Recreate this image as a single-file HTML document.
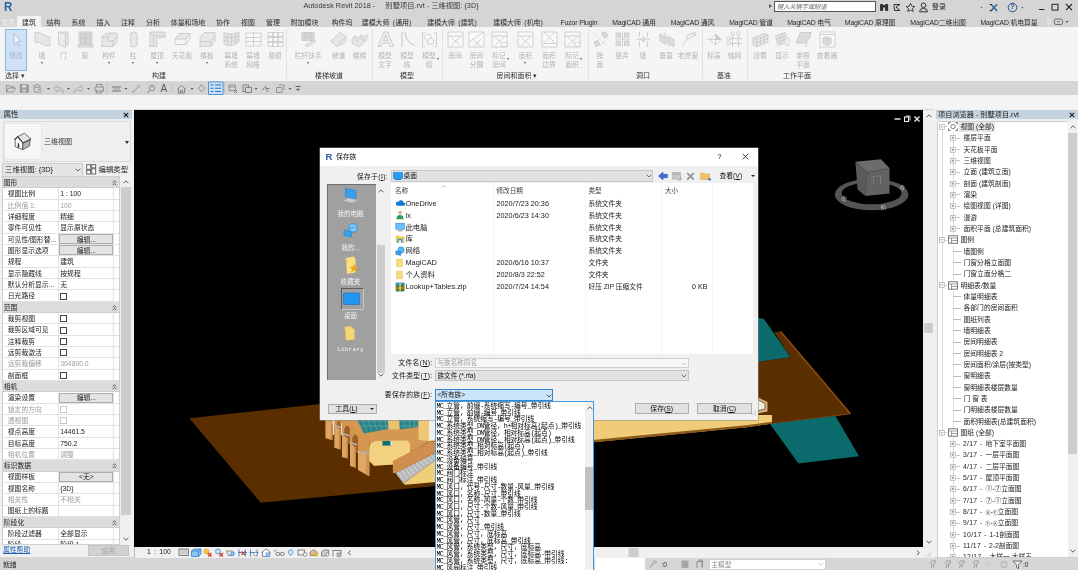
<!DOCTYPE html>
<html lang="zh-CN">
<head>
<meta charset="utf-8">
<title>Autodesk Revit 2018 - 别墅项目.rvt - 三维视图: {3D}</title>
<style>
*{box-sizing:border-box;margin:0;padding:0}
html,body{width:1078px;height:570px;overflow:hidden;background:#d5d5d5}
#root{position:absolute;left:0;top:0;width:1078px;height:570px;will-change:transform;overflow:hidden}
body{position:relative;font-family:"Liberation Sans","Noto Sans CJK SC",sans-serif;font-size:7.2px;color:#222;line-height:10px}
.a{position:absolute;white-space:nowrap}
.c{position:absolute;white-space:nowrap;margin-top:.25px;transform:translate(-50%,-50%);text-align:center}
.l{position:absolute;white-space:nowrap;margin-top:.25px;transform:translate(0,-50%)}
.r{position:absolute;white-space:nowrap;margin-top:.25px;transform:translate(-100%,-50%)}
svg{position:absolute;overflow:visible}
/* title */
#title{left:0;top:0;width:1078px;height:15px;background:#d5d5d5}
#tabs{left:0;top:15px;width:1078px;height:12px;background:#d5d5d5}
#tabs .c{top:7.3px;font-size:6.9px;color:#2b2b2b}
#tabon{left:17px;top:1px;width:24px;height:12px;background:#f2f2f2}
#ribbon{left:0;top:27px;width:1078px;height:54px;background:#f5f5f5}
#ribbon .lb{font-size:6.8px;color:#b4b4b4;line-height:9.2px;top:23.9px;transform:translate(-50%,0);text-align:center;position:absolute;white-space:nowrap}
#ribbon .pt{font-size:7px;color:#333;top:48.5px}
#ribbon .sep{position:absolute;top:2px;width:1px;height:50px;background:#e2e2e2}
#qat{left:0;top:81px;width:1078px;height:14px;background:#d5d5d5}
#opt{left:0;top:95px;width:1078px;height:14px;background:#f4f4f4}
#canvas{left:134px;top:110px;width:789px;height:436.5px;background:#000;overflow:hidden}
#status{left:0;top:557.5px;width:1078px;height:12.5px;background:#d6d6d6}
</style>
</head>
<body>
<div id="root">
<div class="a" id="title">
<div class="a" style="left:4px;top:2.3px;font-size:12.5px;font-weight:bold;color:#2c5fa5;letter-spacing:-0.5px;transform:scaleX(0.92);transform-origin:0 0">R</div>
<div class="c" style="left:391px;top:5.8px;font-size:7.3px;color:#3a3a3a;white-space:pre">Autodesk Revit 2018 -     别墅项目.rvt - 三维视图: {3D}</div>
<div class="a" style="left:768.5px;top:3.5px;width:0;height:0;border-left:3px solid #555;border-top:2.5px solid transparent;border-bottom:2.5px solid transparent"></div>
<div class="a" style="left:774px;top:1px;width:102px;height:11px;background:#fff;border:1px solid #555"></div>
<div class="l" style="left:777px;top:6.5px;font-size:6.2px;font-style:italic;color:#666">键入关键字或短语</div>
<svg style="left:878px;top:1px" width="200" height="13" viewBox="0 0 200 13"><g fill="#333"><rect x="2" y="3" width="3.2" height="7" rx="1"/><rect x="7" y="3" width="3.2" height="7" rx="1"/><rect x="4.5" y="4" width="3" height="2.5"/></g><g fill="none" stroke="#333" stroke-width="1"><path d="M16 3.5 L22 3.5 L18 6 L22 9.5 L16.5 9.5 Z"/></g><path d="M32.5 2.300 L33.800 5.200 L36.800 5.500 L34.500 7.500 L35.200 10.500 L32.500 9 L29.800 10.500 L30.500 7.500 L28.200 5.500 L31.200 5.200 Z" fill="none" stroke="#333" stroke-width="0.9"/><g fill="none" stroke="#333" stroke-width="1"><circle cx="45.5" cy="4.3" r="2.3"/><path d="M41.5 10.8 Q41.5 7.4 45.5 7.4 Q49.5 7.4 49.5 10.8 Z"/></g><circle cx="103.500" cy="6.5" r="0.7" fill="#555"/><g stroke="#2f6b9a" stroke-width="1.6" fill="none"><path d="M113 3.2 L119 10 M119 3.2 L113 10"/></g><path d="M111.500 3.500 h2.500 M111.500 9.700 h2.500" stroke="#333" stroke-width="0.9"/><circle cx="134.500" cy="6.5" r="4.3" fill="none" stroke="#2f4f8f" stroke-width="1"/><circle cx="144.500" cy="6.5" r="0.7" fill="#555"/><path d="M161 8.500 h5.500" stroke="#222" stroke-width="1"/><rect x="174" y="3.300" width="6" height="5.800" fill="none" stroke="#222" stroke-width="1"/><path d="M188 3 L194 9.200 M194 3 L188 9.200" stroke="#222" stroke-width="1.100"/></svg>
<div class="l" style="left:932px;top:6.5px;font-size:7px;color:#222">登录</div>
<div class="c" style="left:1012.5px;top:6.7px;font-size:7px;font-weight:bold;color:#2f4f8f">?</div>
</div>
<div class="a" id="tabs">
<div class="a" id="tabon"></div>
<div class="c" style="left:8.5px;color:#f4f4f4">文件</div>
<div class="c" style="left:29px">建筑</div>
<div class="c" style="left:53.5px">结构</div>
<div class="c" style="left:78.5px">系统</div>
<div class="c" style="left:103.5px">插入</div>
<div class="c" style="left:128px">注释</div>
<div class="c" style="left:153px">分析</div>
<div class="c" style="left:188px">体量和场地</div>
<div class="c" style="left:223px">协作</div>
<div class="c" style="left:248px">视图</div>
<div class="c" style="left:273px">管理</div>
<div class="c" style="left:304.5px">附加模块</div>
<div class="c" style="left:342px">构件坞</div>
<div class="c" style="left:386.5px;word-spacing:1.6px">建模大师 (通用)</div>
<div class="c" style="left:452px;word-spacing:1.6px">建模大师 (建筑)</div>
<div class="c" style="left:518px;word-spacing:1.6px">建模大师 (机电)</div>
<div class="c" style="left:579px;letter-spacing:-0.15px">Fuzor Plugin</div>
<div class="c" style="left:634px;letter-spacing:-0.15px">MagiCAD 通用</div>
<div class="c" style="left:692.5px;letter-spacing:-0.15px">MagiCAD 通风</div>
<div class="c" style="left:751px;letter-spacing:-0.15px">MagiCAD 管道</div>
<div class="c" style="left:809px;letter-spacing:-0.15px">MagiCAD 电气</div>
<div class="c" style="left:870px;letter-spacing:-0.15px">MagiCAD 原理图</div>
<div class="c" style="left:938px;letter-spacing:-0.15px">MagiCAD二维出图</div>
<div class="c" style="left:1009px;letter-spacing:-0.15px">MagiCAD 机电算量</div>
<svg style="left:1046px;top:2px" width="30" height="10" viewBox="0 0 30 10"><rect x="8.5" y="2" width="8" height="5.5" rx="1.5" fill="none" stroke="#555" stroke-width="0.8"/><path d="M11 4.7 h3" stroke="#555" stroke-width="0.8"/><path d="M19.5 4 l1.5 2 l1.5 -2z" fill="#555"/><path d="M2 1.5v6M4 1.5v6" stroke="#eee" stroke-width="1"/></svg>
</div>
<div class="a" id="ribbon">
<div class="a" style="left:5px;top:2px;width:22px;height:42px;background:#cfe1f6;border:1px solid #8db5e3"></div>
<div class="lb" style="left:16px;color:#9bb7d6">修改</div>
<div class="lb" style="left:42px;color:#b4b4b4">墙</div>
<div class="a" style="left:40.5px;top:34.5px;border-top:2px solid #555;border-left:1.5px solid transparent;border-right:1.5px solid transparent"></div>
<div class="lb" style="left:63.5px;color:#b4b4b4">门</div>
<div class="lb" style="left:85px;color:#b4b4b4">窗</div>
<div class="lb" style="left:109px;color:#b4b4b4">构件</div>
<div class="a" style="left:107.5px;top:34.5px;border-top:2px solid #555;border-left:1.5px solid transparent;border-right:1.5px solid transparent"></div>
<div class="lb" style="left:133px;color:#b4b4b4">柱</div>
<div class="a" style="left:131.5px;top:34.5px;border-top:2px solid #555;border-left:1.5px solid transparent;border-right:1.5px solid transparent"></div>
<div class="lb" style="left:157px;color:#b4b4b4">屋顶</div>
<div class="a" style="left:155.5px;top:34.5px;border-top:2px solid #555;border-left:1.5px solid transparent;border-right:1.5px solid transparent"></div>
<div class="lb" style="left:182px;color:#b4b4b4">天花板</div>
<div class="lb" style="left:207px;color:#b4b4b4">楼板</div>
<div class="a" style="left:205.5px;top:34.5px;border-top:2px solid #555;border-left:1.5px solid transparent;border-right:1.5px solid transparent"></div>
<div class="lb" style="left:231px;color:#b4b4b4">幕墙<br>系统</div>
<div class="lb" style="left:253px;color:#b4b4b4">幕墙<br>网格</div>
<div class="lb" style="left:275px;color:#b4b4b4">竖梃</div>
<div class="lb" style="left:308px;color:#b4b4b4">栏杆扶手</div>
<div class="a" style="left:306.5px;top:34.5px;border-top:2px solid #555;border-left:1.5px solid transparent;border-right:1.5px solid transparent"></div>
<div class="lb" style="left:338.5px;color:#b4b4b4">坡道</div>
<div class="lb" style="left:359.5px;color:#b4b4b4">楼梯</div>
<div class="lb" style="left:385px;color:#b4b4b4">模型<br>文字</div>
<div class="lb" style="left:407px;color:#b4b4b4">模型<br>线</div>
<div class="lb" style="left:429px;color:#b4b4b4">模型<br>组</div>
<div class="a" style="left:436.5px;top:31px;border-top:2px solid #555;border-left:1.5px solid transparent;border-right:1.5px solid transparent"></div>
<div class="lb" style="left:455px;color:#b4b4b4">房间</div>
<div class="lb" style="left:476.5px;color:#b4b4b4">房间<br>分隔</div>
<div class="lb" style="left:499px;color:#b4b4b4">标记<br>房间</div>
<div class="a" style="left:506.5px;top:31px;border-top:2px solid #555;border-left:1.5px solid transparent;border-right:1.5px solid transparent"></div>
<div class="lb" style="left:525.5px;color:#b4b4b4">面积</div>
<div class="a" style="left:524.0px;top:34.5px;border-top:2px solid #555;border-left:1.5px solid transparent;border-right:1.5px solid transparent"></div>
<div class="lb" style="left:549px;color:#b4b4b4">面积<br>边界</div>
<div class="lb" style="left:572px;color:#b4b4b4">标记<br>面积</div>
<div class="a" style="left:579.5px;top:31px;border-top:2px solid #555;border-left:1.5px solid transparent;border-right:1.5px solid transparent"></div>
<div class="lb" style="left:600px;color:#b4b4b4">按<br>面</div>
<div class="lb" style="left:622px;color:#b4b4b4">竖井</div>
<div class="lb" style="left:643px;color:#b4b4b4">墙</div>
<div class="lb" style="left:666px;color:#b4b4b4">垂直</div>
<div class="lb" style="left:688px;color:#b4b4b4">老虎窗</div>
<div class="lb" style="left:714px;color:#b4b4b4">标高</div>
<div class="lb" style="left:734.5px;color:#b4b4b4">轴网</div>
<div class="lb" style="left:760px;color:#b4b4b4">设置</div>
<div class="lb" style="left:782px;color:#b4b4b4">显示</div>
<div class="lb" style="left:803px;color:#b4b4b4">参照<br>平面</div>
<div class="lb" style="left:827px;color:#b4b4b4">查看器</div>
<div class="c pt" style="left:15px">选择 ▾</div>
<div class="c pt" style="left:159px">构建</div>
<div class="c pt" style="left:329px">楼梯坡道</div>
<div class="c pt" style="left:407px">模型</div>
<div class="c pt" style="left:517px">房间和面积 ▾</div>
<div class="c pt" style="left:643px">洞口</div>
<div class="c pt" style="left:724px">基准</div>
<div class="c pt" style="left:797px">工作平面</div>
<div class="sep" style="left:285.5px"></div>
<div class="sep" style="left:372px"></div>
<div class="sep" style="left:442px"></div>
<div class="sep" style="left:587.5px"></div>
<div class="sep" style="left:701.7px"></div>
<div class="sep" style="left:747.3px"></div>
<svg style="left:7.5px;top:3.5px" width="17" height="17" viewBox="0 0 17 17"><path d="M6 2.500L6 13.500L8.500 11L10.300 15L11.800 14.300L10 10.500L13.200 10.300Z" fill="#eef3fa" stroke="#9db6d4" stroke-width="0.8" stroke-linejoin="round"/></svg>
<svg style="left:33.5px;top:3.5px" width="17" height="17" viewBox="0 0 17 17"><g fill="#e7e7e7" stroke="#c6c6c6" stroke-width="0.8" stroke-linejoin="round"><path d="M1 1.500Q5 1 9 3.500T16 5.500V14.500Q12 15.500 8.500 13T1 11.500Z"/></g></svg>
<svg style="left:55.0px;top:3.5px" width="17" height="17" viewBox="0 0 17 17"><g fill="#e7e7e7" stroke="#c6c6c6" stroke-width="0.8" stroke-linejoin="round"><path d="M3.500 1H13V14H10.500"/><path d="M3.500 1L10.500 3V16.500L3.500 13.500Z" fill="#ececec"/><path d="M9 9.500v1.500" /></g></svg>
<svg style="left:76.5px;top:3.5px" width="17" height="17" viewBox="0 0 17 17"><g fill="#e7e7e7" stroke="#c6c6c6" stroke-width="0.8" stroke-linejoin="round"><rect x="2" y="1" width="13" height="13"/><path d="M3.500 2.500h10v10h-10zM8.500 2.500v10M3.500 7.500h10" fill="#d6d6d6"/><rect x="1" y="14" width="15" height="2"/></g></svg>
<svg style="left:100.5px;top:3.5px" width="17" height="17" viewBox="0 0 17 17"><g fill="#e7e7e7" stroke="#c6c6c6" stroke-width="0.8" stroke-linejoin="round"><path d="M1 6L5 2H16V11L12 15.500H1Z"/><path d="M1 6H7V10H12V15.500M7 6L10.500 2M12 10L16 6" fill="none"/></g></svg>
<svg style="left:124.5px;top:3.5px" width="17" height="17" viewBox="0 0 17 17"><g fill="#e7e7e7" stroke="#c6c6c6" stroke-width="0.8" stroke-linejoin="round"><rect x="5.500" y="1" width="6.500" height="15" rx="3"/></g></svg>
<svg style="left:148.5px;top:3.5px" width="17" height="17" viewBox="0 0 17 17"><g fill="#e7e7e7" stroke="#c6c6c6" stroke-width="0.8" stroke-linejoin="round"><path d="M1 1H16V6.500H8V15.500H1Z"/><path d="M1 1L4.500 4.500H16M4.500 4.500V15.500" fill="none"/></g></svg>
<svg style="left:173.5px;top:3.5px" width="17" height="17" viewBox="0 0 17 17"><g fill="#e7e7e7" stroke="#c6c6c6" stroke-width="0.8" stroke-linejoin="round"><path d="M5 2.500H16L12 8H1Z"/><path d="M1 8V13.500H12L16 8V2.500M12 8V13.500" fill="none"/></g></svg>
<svg style="left:198.5px;top:3.5px" width="17" height="17" viewBox="0 0 17 17"><g fill="#e7e7e7" stroke="#c6c6c6" stroke-width="0.8" stroke-linejoin="round"><path d="M5 1.500H16V10L12 15.500H1V7Z"/><path d="M1 10.500H12L16 5M12 10.500V15.500" fill="none"/></g></svg>
<svg style="left:222.5px;top:3.5px" width="17" height="17" viewBox="0 0 17 17"><g fill="#e7e7e7" stroke="#c6c6c6" stroke-width="0.8" stroke-linejoin="round"><path d="M1 1.500Q8 4.500 16 1V11Q8 17 1 13Z"/><path d="M4.700 2.800V14.500M8.500 3.300V15M12.300 2.500V13.500M1 5.500Q8 8.500 16 4.500M1 9.500Q8 12.500 16 8" fill="none"/></g></svg>
<svg style="left:244.5px;top:3.5px" width="17" height="17" viewBox="0 0 17 17"><g fill="#e7e7e7" stroke="#c6c6c6" stroke-width="0.8" stroke-linejoin="round"><rect x="1" y="2" width="15" height="13" fill="#f9f9f9"/><path d="M1 6.500H16M1 10.500H16M8.500 2V15" fill="none"/></g></svg>
<svg style="left:266.5px;top:3.5px" width="17" height="17" viewBox="0 0 17 17"><g fill="#e7e7e7" stroke="#c6c6c6" stroke-width="0.8" stroke-linejoin="round"><rect x="1" y="1.500" width="15" height="14" fill="#f9f9f9"/><path d="M6 1.500V15.500M11 1.500V15.500M1 6H16M1 11H16" fill="none" stroke-width="1.300"/></g></svg>
<svg style="left:299.5px;top:3.5px" width="17" height="17" viewBox="0 0 17 17"><g fill="#e7e7e7" stroke="#c6c6c6" stroke-width="0.8" stroke-linejoin="round"><path d="M2 1.500H14V9.500H2ZM2 4H14M2 6.500H14M5 1.500V9.500M8 1.500V9.500M11 1.500V9.500" fill="#dadada"/><path d="M5 14.500L14 9L16 10.500L7 16Z"/></g></svg>
<svg style="left:330.0px;top:3.5px" width="17" height="17" viewBox="0 0 17 17"><g fill="#e7e7e7" stroke="#c6c6c6" stroke-width="0.8" stroke-linejoin="round"><path d="M1 10L10 1.500L16 5.500V11L6.500 15.500Z"/><path d="M1 10L6.500 15.500M6.500 15.500L16 5.500" fill="none"/></g></svg>
<svg style="left:351.0px;top:3.5px" width="17" height="17" viewBox="0 0 17 17"><g fill="#e7e7e7" stroke="#c6c6c6" stroke-width="0.8" stroke-linejoin="round"><path d="M1 8L4 5L7 7L10 4L13 6L16 3.500V8.500L8 16L1 12Z"/><path d="M4 5V9L7 11V7M10 4V8L13 10V6" fill="none"/></g></svg>
<svg style="left:376.5px;top:3.5px" width="17" height="17" viewBox="0 0 17 17"><g fill="#e7e7e7" stroke="#c6c6c6" stroke-width="0.8" stroke-linejoin="round"><path d="M1 15.500L7 1H10.500L16.500 15.500H13L11.800 12H5.500L4.300 15.500ZM6.500 9.500H10.800L8.700 4Z" fill="#efefef" stroke-width="0.9"/></g></svg>
<svg style="left:398.5px;top:3.5px" width="17" height="17" viewBox="0 0 17 17"><g fill="#e7e7e7" stroke="#c6c6c6" stroke-width="0.8" stroke-linejoin="round"><path d="M3 1V16M6 1Q7 12 16 14.500" fill="none" stroke-width="1"/></g></svg>
<svg style="left:420.5px;top:3.5px" width="17" height="17" viewBox="0 0 17 17"><g fill="#e7e7e7" stroke="#c6c6c6" stroke-width="0.8" stroke-linejoin="round"><path d="M4 1.500H1.500V15.500H4M13 1.500H15.500V15.500H13" fill="none"/><circle cx="7" cy="6.500" r="3.200" fill="#f9f9f9"/><rect x="7" y="7.500" width="5.500" height="5.500" rx="1" fill="#f9f9f9"/></g></svg>
<svg style="left:446.5px;top:3.5px" width="17" height="17" viewBox="0 0 17 17"><g fill="#e7e7e7" stroke="#c6c6c6" stroke-width="0.8" stroke-linejoin="round"><rect x="1" y="1" width="15" height="15" fill="#f9f9f9"/><path d="M3.500 5.500L13.500 15M13.500 5.500L3.500 15M1 5h15" fill="none"/></g></svg>
<svg style="left:468.0px;top:3.5px" width="17" height="17" viewBox="0 0 17 17"><g fill="#e7e7e7" stroke="#c6c6c6" stroke-width="0.8" stroke-linejoin="round"><rect x="1" y="1" width="15" height="15" fill="#f9f9f9"/><path d="M1 11L16 1M5 8.500L13 15.500M13 8L6 15.500" fill="none"/></g></svg>
<svg style="left:490.5px;top:3.5px" width="17" height="17" viewBox="0 0 17 17"><g fill="#e7e7e7" stroke="#c6c6c6" stroke-width="0.8" stroke-linejoin="round"><rect x="1" y="1" width="15" height="15" fill="#f9f9f9"/><path d="M3.500 5.500L13.500 15M13.500 5.500L3.500 15M1 5h15" fill="none"/><rect x="10.500" y="11.500" width="6" height="4" rx="1" fill="#fafafa"/></g></svg>
<svg style="left:517.0px;top:3.5px" width="17" height="17" viewBox="0 0 17 17"><g fill="#e7e7e7" stroke="#c6c6c6" stroke-width="0.8" stroke-linejoin="round"><rect x="1" y="1" width="15" height="15" fill="#f9f9f9"/><path d="M3.500 5.500L13.500 15M13.500 5.500L3.500 15M1 5h15" fill="none"/></g></svg>
<svg style="left:540.5px;top:3.5px" width="17" height="17" viewBox="0 0 17 17"><g fill="#e7e7e7" stroke="#c6c6c6" stroke-width="0.8" stroke-linejoin="round"><rect x="1" y="1" width="15" height="15" fill="#f9f9f9"/><path d="M1 12.500H16M3 1L14 12M14 1L3 12" fill="none"/></g></svg>
<svg style="left:563.5px;top:3.5px" width="17" height="17" viewBox="0 0 17 17"><g fill="#e7e7e7" stroke="#c6c6c6" stroke-width="0.8" stroke-linejoin="round"><rect x="1" y="1" width="15" height="15" fill="#f9f9f9"/><path d="M3.500 5.500L13.500 15M13.500 5.500L3.500 15M1 5h15" fill="none"/><rect x="10.500" y="11.500" width="6" height="4" rx="2" fill="#fafafa"/></g></svg>
<svg style="left:591.5px;top:3.5px" width="17" height="17" viewBox="0 0 17 17"><g fill="#e7e7e7" stroke="#c6c6c6" stroke-width="0.8" stroke-linejoin="round"><path d="M9.500 2L14 1L16 5L12 7ZM2 11L6 9.500L8 13.500L4 15.500Z" fill="#d8d8d8"/><path d="M2 2.500L14.500 14.500M15 7.500L8 15" fill="none" stroke-dasharray="1.5 1"/></g></svg>
<svg style="left:613.5px;top:3.5px" width="17" height="17" viewBox="0 0 17 17"><g fill="#e7e7e7" stroke="#c6c6c6" stroke-width="0.8" stroke-linejoin="round"><path d="M2 2H6.500V6H2ZM10.500 2H15V6H10.500ZM2 10H6.500V14.500H2ZM10.500 10H15V14.500H10.500Z" fill="#dcdcdc"/><path d="M8.500 1V16M1 8H16" fill="none"/></g></svg>
<svg style="left:634.5px;top:3.5px" width="17" height="17" viewBox="0 0 17 17"><g fill="#e7e7e7" stroke="#c6c6c6" stroke-width="0.8" stroke-linejoin="round"><path d="M4.500 1V6.500M12.500 1V6.500M4.500 10V16M12.500 10V16M2 8.300H15" fill="none"/><path d="M6.500 8.300L8.500 5.500L10.500 8.300L8.500 11Z" fill="#dcdcdc"/></g></svg>
<svg style="left:657.5px;top:3.5px" width="17" height="17" viewBox="0 0 17 17"><g fill="#e7e7e7" stroke="#c6c6c6" stroke-width="0.8" stroke-linejoin="round"><path d="M2 3L8 6.500V13.500L2 10ZM10 5L16 8.500V15.500L10 12Z" fill="#dcdcdc"/><path d="M6 1L12 16" fill="none"/></g></svg>
<svg style="left:679.5px;top:3.5px" width="17" height="17" viewBox="0 0 17 17"><g fill="#e7e7e7" stroke="#c6c6c6" stroke-width="0.8" stroke-linejoin="round"><path d="M2 15.500L7 8V4L13 2.500" fill="none"/><path d="M7 8L16 4" fill="none"/><circle cx="14.500" cy="2.500" r="1.500"/></g></svg>
<svg style="left:705.5px;top:3.5px" width="17" height="17" viewBox="0 0 17 17"><g fill="#e7e7e7" stroke="#c6c6c6" stroke-width="0.8" stroke-linejoin="round"><path d="M1 8.500H5" fill="none"/><path d="M9.500 3L15 8.500L9.500 14L4 8.500Z" fill="#fafafa"/><path d="M9.500 3V14M4 8.500H15" fill="none"/><path d="M9.500 3L15 8.500H9.500Z" fill="#cfcfcf"/></g></svg>
<svg style="left:726.0px;top:3.5px" width="17" height="17" viewBox="0 0 17 17"><g fill="#e7e7e7" stroke="#c6c6c6" stroke-width="0.8" stroke-linejoin="round"><path d="M6.500 4V16M12.500 4V16M4 7.500H16M4 12.500H16" fill="none"/><circle cx="6.500" cy="2.500" r="1.700" fill="#fafafa"/><circle cx="12.500" cy="2.500" r="1.700" fill="#fafafa"/><circle cx="2.300" cy="7.500" r="1.700" fill="#fafafa"/><circle cx="2.300" cy="12.500" r="1.700" fill="#fafafa"/></g></svg>
<svg style="left:751.5px;top:3.5px" width="17" height="17" viewBox="0 0 17 17"><g fill="#e7e7e7" stroke="#c6c6c6" stroke-width="0.8" stroke-linejoin="round"><path d="M1 7L12 2.500L16 4V11L5 15.500L1 14Z"/><path d="M5 8.500V15.500M1 7L5 8.500L16 4M1 10.500L5 12L16 7.500M8.700 7V14M12.300 5.500V12.500" fill="none"/></g></svg>
<svg style="left:773.5px;top:3.5px" width="17" height="17" viewBox="0 0 17 17"><g fill="#e7e7e7" stroke="#c6c6c6" stroke-width="0.8" stroke-linejoin="round"><path d="M1.500 5L11 1.500L13 11L4 14.500Z"/><path d="M2.500 8.200L11.800 4.800M3.300 11.300L12.500 8M4.700 3.800L7.200 13.200M7.800 2.700L10.200 12.100" fill="none"/><path d="M11 9.500A2.500 2.500 0 1 1 14.500 12V14.500H12V12" fill="#f3f3f3"/></g></svg>
<svg style="left:794.5px;top:3.5px" width="17" height="17" viewBox="0 0 17 17"><g fill="#e7e7e7" stroke="#c6c6c6" stroke-width="0.8" stroke-linejoin="round"><path d="M5.500 1.500H16L11.500 12H1Z" fill="#dcdcdc"/><path d="M11.500 12L10.500 16M16 1.500L14.500 8" fill="none"/></g></svg>
<svg style="left:818.5px;top:3.5px" width="17" height="17" viewBox="0 0 17 17"><g fill="#e7e7e7" stroke="#c6c6c6" stroke-width="0.8" stroke-linejoin="round"><rect x="1" y="1" width="15" height="15" fill="#f9f9f9"/><path d="M1 3.500H16" fill="none"/><path d="M4 7.500C4 5.500 12 5.500 12 7.500V12.500C12 14.500 4 14.500 4 12.500Z" fill="#dcdcdc"/><path d="M4 7.500C4 9.500 12 9.500 12 7.500" fill="none"/></g></svg>
</div>
<div class="a" id="qat"><svg style="left:0;top:0" width="320" height="14" viewBox="0 81 320 14"><g fill="none" stroke="#8c8c8c" stroke-width="0.9" stroke-linejoin="round"><path d="M6.500 92V85.500H9l1 1.200h3.500V88M6.500 92l2-4h7l-2 4z"/><path d="M20.300 84.500h7l1 1V92.300h-8z" fill="#9c9c9c" stroke="#8a8a8a" stroke-width="0.800"/><rect x="22" y="84.800" width="4.300" height="2.800" fill="#d5d5d5" stroke="none"/><rect x="22.300" y="89.300" width="3.800" height="3" fill="#c4c4c4" stroke="none"/><path d="M34 86c0-1.800 6-1.800 6 0v5c0 1.800-6 1.800-6 0zM34 86c0 1.800 6 1.800 6 0"/><path d="M38 89.500l3 0 0 3.500" /><circle cx="40" cy="91" r="2" fill="#bbb" stroke="none"/><path d="M54 88.800l3.300-3.300v2c4 0 6.200 1.800 6.200 5.300-1.200-2-3.200-2.700-6.200-2.700v2z" stroke="#a8a8a8" stroke-width="0.800"/><path d="M83.500 88.800l-3.300-3.300v2c-4 0-6.200 1.800-6.200 5.300 1.200-2 3.200-2.700 6.200-2.700v2z" stroke="#a8a8a8" stroke-width="0.800"/><path d="M96.500 87V84.500h5.500V87M95 87h8.500v4H95zM96.500 90v3h5.500v-3"/><path d="M107 83v10.500M172 83v10.500M224.500 83v10.500" stroke="#bdbdbd" stroke-width="0.700"/><path d="M112 87h9M112 91h9" stroke="#777" stroke-width="1.100"/><path d="M113 88.300h7v1.400h-7z" fill="#aaa" stroke="none"/><path d="M132.500 92.500l7-7M132 90.500l2.500 2.500M137.500 85l2.500 2.500" /><circle cx="152" cy="88" r="2.800"/><path d="M152 88v-2M147.500 93l2.500-3"/><path d="M147 92.500h1.500" /><path d="M177.500 89l4-3.500 4 3.500M178.500 88.500V93h6V88.500M180.500 93v-2.500h2V93" stroke="#777"/><path d="M201.500 84.500l3 3.700-3 3.700-3-3.700z"/><rect x="208.500" y="82" width="14.500" height="12.500" fill="#cfe1f6" stroke="#3c8ad8" stroke-width="0.900"/><path d="M210.500 85h3M215 85h6M210.500 88.300h3M215 88.300h6M210.500 91.500h3M215 91.500h6" stroke="#2f6fb5" stroke-width="1.100"/><path d="M229 85h6.500v5.500H229zM229 87h6.500"/><path d="M234 90l3 3M237 90l-3 3" stroke="#777"/><path d="M243 85h5.500v2M243 85v6.500h2.500M245.500 87.500h6v5h-6z" stroke="#777"/><path d="M262 90l4-3.500v2h3.500M266 88.500l2 3.500" stroke="#777"/><path d="M278.500 85h5.500v5M276.500 87.500h5.500v5h-5.500z"/><path d="M295.500 86.500h5" stroke="#555"/></g><g fill="#555"><path d="M46.9 88l1.500 1.800 1.500-1.800z"/><path d="M67.0 88l1.500 1.800 1.500-1.800z"/><path d="M87.0 88l1.500 1.800 1.500-1.800z"/><path d="M124.5 88l1.500 1.800 1.500-1.800z"/><path d="M190.5 88l1.500 1.800 1.500-1.800z"/><path d="M254.5 88l1.500 1.800 1.500-1.800z"/><path d="M288.5 88l1.500 1.800 1.500-1.800z"/><path d="M296 88.800l2 2.200 2-2.200z"/></g><text x="163.800" y="92.300" font-size="10" text-anchor="middle" fill="#5a5a5a" font-family="Liberation Sans, sans-serif">A</text></svg></div>
<div class="a" id="opt"></div>
<div class="a" id="left" style="left:0;top:109px;width:134px;height:448px;background:#f0f0f0">
<div class="a" style="left:0;top:0.5px;width:131.5px;height:9.8px;background:#c5d3e1"></div>
<div class="l" style="left:3.5px;top:5.3px;font-size:7.6px;color:#1e1e1e">属性</div>
<svg style="left:123px;top:3px" width="6" height="6" viewBox="0 0 6 6"><path d="M0.8 0.8L5.2 5.2M5.2 0.8L0.8 5.2" stroke="#1a1a1a" stroke-width="1.1"/></svg>
<div class="a" style="left:2.5px;top:12px;width:128px;height:41px;background:#efefef;border:1px solid #dadada"></div>
<div class="a" style="left:4px;top:14px;width:37.5px;height:37px;background:#f6f6f6;border:1px solid #e6e6e6"></div>
<svg style="left:10px;top:21px" width="24" height="22" viewBox="10 130 24 22"><g stroke="#4a4a4a" stroke-width="0.800" stroke-linejoin="round"><polygon points="15.200,139.900 17.700,137.100 22.900,142.700 22.600,149.700 15.200,146.600" fill="#fdfdfd"/><polygon points="22.900,142.700 30,139.500 29.600,145.900 22.600,149.700" fill="#b4b4b4"/><polygon points="17.700,136.700 24.400,133.200 31,139.200 22.900,142.900" fill="#e6e6e6"/><path d="M14.200 139.700L17.700 136.700L22.900 142.900L31 139.200" fill="none" stroke-width="1.100"/><polygon points="17.700,143.400 19.100,143 19.300,148 17.700,147.300" fill="#333" stroke="none"/></g></svg>
<div class="l" style="left:44px;top:33px;font-size:7px;color:#333">三维视图</div>
<div class="a" style="left:124.5px;top:31.5px;border-top:3px solid #333;border-left:2.3px solid transparent;border-right:2.3px solid transparent"></div>
<div class="a" style="left:2px;top:53.5px;width:80.5px;height:14px;background:#e4e4e4;border:1px solid #cfcfcf"></div>
<div class="l" style="left:5px;top:61px;font-size:7.4px;color:#222">三维视图: {3D}</div>
<svg style="left:75px;top:59px" width="6" height="4" viewBox="0 0 6 4"><path d="M0.7 0.7L3 3L5.3 0.7" fill="none" stroke="#444" stroke-width="0.8"/></svg>
<svg style="left:86px;top:55px" width="11" height="11" viewBox="0 0 11 11"><g fill="#fff" stroke="#555" stroke-width="0.9"><rect x="0.7" y="0.7" width="4" height="4.6"/><rect x="5.7" y="0.7" width="4" height="3.2"/><rect x="0.7" y="6.2" width="4" height="3.8"/><rect x="5.7" y="4.8" width="4" height="5.2"/></g></svg>
<div class="l" style="left:98.5px;top:61px;font-size:7.4px;color:#222">编辑类型</div>
<div class="a" style="left:1.8px;top:67px;width:118.7px;height:368.5px;background:#fff;border:1px solid #cfcfcf;overflow:hidden" id="ptable">
<div class="a" style="left:0;top:0.0px;width:118px;height:11.33px;background:#dcdcdc;border-bottom:1px solid #cfcfcf;z-index:2"></div>
<div class="l" style="left:1px;top:5.665px;font-size:6.8px;color:#222;z-index:3">图形</div>
<svg style="left:109.5px;top:3.0px;z-index:3" width="5" height="6" viewBox="0 0 5 6"><path d="M0.7 2.6L2.5 0.8L4.3 2.6M0.7 5.2L2.5 3.4L4.3 5.2" fill="none" stroke="#333" stroke-width="0.8"/></svg>
<div class="a" style="left:0;top:11.33px;width:118px;height:11.33px;border-bottom:1px solid #e2e2e2"></div>
<div class="l" style="left:5px;top:16.995px;font-size:6.8px;color:#222">视图比例</div>
<div class="l" style="left:57.5px;top:16.995px;font-size:6.8px;color:#222">1 : 100</div>
<div class="a" style="left:0;top:22.66px;width:118px;height:11.33px;border-bottom:1px solid #e2e2e2"></div>
<div class="l" style="left:5px;top:28.325px;font-size:6.8px;color:#9a9a9a">比例值 1:</div>
<div class="l" style="left:57.5px;top:28.325px;font-size:6.8px;color:#9a9a9a">100</div>
<div class="a" style="left:0;top:33.99px;width:118px;height:11.33px;border-bottom:1px solid #e2e2e2"></div>
<div class="l" style="left:5px;top:39.655px;font-size:6.8px;color:#222">详细程度</div>
<div class="l" style="left:57.5px;top:39.655px;font-size:6.8px;color:#222">精细</div>
<div class="a" style="left:0;top:45.32px;width:118px;height:11.33px;border-bottom:1px solid #e2e2e2"></div>
<div class="l" style="left:5px;top:50.985px;font-size:6.8px;color:#222">零件可见性</div>
<div class="l" style="left:57.5px;top:50.985px;font-size:6.8px;color:#222">显示原状态</div>
<div class="a" style="left:0;top:56.65px;width:118px;height:11.33px;border-bottom:1px solid #e2e2e2"></div>
<div class="l" style="left:5px;top:62.315px;font-size:6.8px;color:#222">可见性/图形替...</div>
<div class="a" style="left:56.5px;top:57.15px;width:54px;height:9.83px;background:#e3e3e3;border:1px solid #adadad"></div>
<div class="c" style="left:83.5px;top:62.315px;font-size:6.8px;color:#222">编辑...</div>
<div class="a" style="left:0;top:67.98px;width:118px;height:11.33px;border-bottom:1px solid #e2e2e2"></div>
<div class="l" style="left:5px;top:73.64500000000001px;font-size:6.8px;color:#222">图形显示选项</div>
<div class="a" style="left:56.5px;top:68.48px;width:54px;height:9.83px;background:#e3e3e3;border:1px solid #adadad"></div>
<div class="c" style="left:83.5px;top:73.64500000000001px;font-size:6.8px;color:#222">编辑...</div>
<div class="a" style="left:0;top:79.31px;width:118px;height:11.33px;border-bottom:1px solid #e2e2e2"></div>
<div class="l" style="left:5px;top:84.97500000000001px;font-size:6.8px;color:#222">规程</div>
<div class="l" style="left:57.5px;top:84.97500000000001px;font-size:6.8px;color:#222">建筑</div>
<div class="a" style="left:0;top:90.64px;width:118px;height:11.33px;border-bottom:1px solid #e2e2e2"></div>
<div class="l" style="left:5px;top:96.305px;font-size:6.8px;color:#222">显示隐藏线</div>
<div class="l" style="left:57.5px;top:96.305px;font-size:6.8px;color:#222">按规程</div>
<div class="a" style="left:0;top:101.97px;width:118px;height:11.33px;border-bottom:1px solid #e2e2e2"></div>
<div class="l" style="left:5px;top:107.635px;font-size:6.8px;color:#222">默认分析显示...</div>
<div class="l" style="left:57.5px;top:107.635px;font-size:6.8px;color:#222">无</div>
<div class="a" style="left:0;top:113.3px;width:118px;height:11.33px;border-bottom:1px solid #e2e2e2"></div>
<div class="l" style="left:5px;top:118.965px;font-size:6.8px;color:#222">日光路径</div>
<div class="a" style="left:57.5px;top:115.6px;width:7px;height:7px;background:#fff;border:1px solid #444"></div>
<div class="a" style="left:0;top:124.63px;width:118px;height:11.33px;background:#dcdcdc;border-bottom:1px solid #cfcfcf;z-index:2"></div>
<div class="l" style="left:1px;top:130.295px;font-size:6.8px;color:#222;z-index:3">范围</div>
<svg style="left:109.5px;top:127.63px;z-index:3" width="5" height="6" viewBox="0 0 5 6"><path d="M0.7 2.6L2.5 0.8L4.3 2.6M0.7 5.2L2.5 3.4L4.3 5.2" fill="none" stroke="#333" stroke-width="0.8"/></svg>
<div class="a" style="left:0;top:135.96px;width:118px;height:11.33px;border-bottom:1px solid #e2e2e2"></div>
<div class="l" style="left:5px;top:141.625px;font-size:6.8px;color:#222">裁剪视图</div>
<div class="a" style="left:57.5px;top:138.26000000000002px;width:7px;height:7px;background:#fff;border:1px solid #444"></div>
<div class="a" style="left:0;top:147.29px;width:118px;height:11.33px;border-bottom:1px solid #e2e2e2"></div>
<div class="l" style="left:5px;top:152.95499999999998px;font-size:6.8px;color:#222">裁剪区域可见</div>
<div class="a" style="left:57.5px;top:149.59px;width:7px;height:7px;background:#fff;border:1px solid #444"></div>
<div class="a" style="left:0;top:158.62px;width:118px;height:11.33px;border-bottom:1px solid #e2e2e2"></div>
<div class="l" style="left:5px;top:164.285px;font-size:6.8px;color:#222">注释裁剪</div>
<div class="a" style="left:57.5px;top:160.92000000000002px;width:7px;height:7px;background:#fff;border:1px solid #444"></div>
<div class="a" style="left:0;top:169.95px;width:118px;height:11.33px;border-bottom:1px solid #e2e2e2"></div>
<div class="l" style="left:5px;top:175.61499999999998px;font-size:6.8px;color:#222">远剪裁激活</div>
<div class="a" style="left:57.5px;top:172.25px;width:7px;height:7px;background:#fff;border:1px solid #444"></div>
<div class="a" style="left:0;top:181.28px;width:118px;height:11.33px;border-bottom:1px solid #e2e2e2"></div>
<div class="l" style="left:5px;top:186.945px;font-size:6.8px;color:#9a9a9a">远剪裁偏移</div>
<div class="l" style="left:57.5px;top:186.945px;font-size:6.8px;color:#9a9a9a">304800.0</div>
<div class="a" style="left:0;top:192.61px;width:118px;height:11.33px;border-bottom:1px solid #e2e2e2"></div>
<div class="l" style="left:5px;top:198.275px;font-size:6.8px;color:#222">剖面框</div>
<div class="a" style="left:57.5px;top:194.91000000000003px;width:7px;height:7px;background:#fff;border:1px solid #444"></div>
<div class="a" style="left:0;top:203.94px;width:118px;height:11.33px;background:#dcdcdc;border-bottom:1px solid #cfcfcf;z-index:2"></div>
<div class="l" style="left:1px;top:209.605px;font-size:6.8px;color:#222;z-index:3">相机</div>
<svg style="left:109.5px;top:206.94px;z-index:3" width="5" height="6" viewBox="0 0 5 6"><path d="M0.7 2.6L2.5 0.8L4.3 2.6M0.7 5.2L2.5 3.4L4.3 5.2" fill="none" stroke="#333" stroke-width="0.8"/></svg>
<div class="a" style="left:0;top:215.27px;width:118px;height:11.33px;border-bottom:1px solid #e2e2e2"></div>
<div class="l" style="left:5px;top:220.935px;font-size:6.8px;color:#222">渲染设置</div>
<div class="a" style="left:56.5px;top:215.77px;width:54px;height:9.83px;background:#e3e3e3;border:1px solid #adadad"></div>
<div class="c" style="left:83.5px;top:220.935px;font-size:6.8px;color:#222">编辑...</div>
<div class="a" style="left:0;top:226.6px;width:118px;height:11.33px;border-bottom:1px solid #e2e2e2"></div>
<div class="l" style="left:5px;top:232.265px;font-size:6.8px;color:#9a9a9a">锁定的方向</div>
<div class="a" style="left:57.5px;top:228.9px;width:7px;height:7px;background:#fff;border:1px solid #c8c8c8"></div>
<div class="a" style="left:0;top:237.93px;width:118px;height:11.33px;border-bottom:1px solid #e2e2e2"></div>
<div class="l" style="left:5px;top:243.595px;font-size:6.8px;color:#9a9a9a">透视图</div>
<div class="a" style="left:57.5px;top:240.23000000000002px;width:7px;height:7px;background:#fff;border:1px solid #c8c8c8"></div>
<div class="a" style="left:0;top:249.26px;width:118px;height:11.33px;border-bottom:1px solid #e2e2e2"></div>
<div class="l" style="left:5px;top:254.92499999999998px;font-size:6.8px;color:#222">视点高度</div>
<div class="l" style="left:57.5px;top:254.92499999999998px;font-size:6.8px;color:#222">14461.5</div>
<div class="a" style="left:0;top:260.59px;width:118px;height:11.33px;border-bottom:1px solid #e2e2e2"></div>
<div class="l" style="left:5px;top:266.255px;font-size:6.8px;color:#222">目标高度</div>
<div class="l" style="left:57.5px;top:266.255px;font-size:6.8px;color:#222">750.2</div>
<div class="a" style="left:0;top:271.92px;width:118px;height:11.33px;border-bottom:1px solid #e2e2e2"></div>
<div class="l" style="left:5px;top:277.58500000000004px;font-size:6.8px;color:#9a9a9a">相机位置</div>
<div class="l" style="left:57.5px;top:277.58500000000004px;font-size:6.8px;color:#9a9a9a">调整</div>
<div class="a" style="left:0;top:283.25px;width:118px;height:11.33px;background:#dcdcdc;border-bottom:1px solid #cfcfcf;z-index:2"></div>
<div class="l" style="left:1px;top:288.915px;font-size:6.8px;color:#222;z-index:3">标识数据</div>
<svg style="left:109.5px;top:286.25px;z-index:3" width="5" height="6" viewBox="0 0 5 6"><path d="M0.7 2.6L2.5 0.8L4.3 2.6M0.7 5.2L2.5 3.4L4.3 5.2" fill="none" stroke="#333" stroke-width="0.8"/></svg>
<div class="a" style="left:0;top:294.58px;width:118px;height:11.33px;border-bottom:1px solid #e2e2e2"></div>
<div class="l" style="left:5px;top:300.245px;font-size:6.8px;color:#222">视图样板</div>
<div class="a" style="left:56.5px;top:295.08px;width:54px;height:9.83px;background:#e3e3e3;border:1px solid #adadad"></div>
<div class="c" style="left:83.5px;top:300.245px;font-size:6.8px;color:#222">&lt;无&gt;</div>
<div class="a" style="left:0;top:305.91px;width:118px;height:11.33px;border-bottom:1px solid #e2e2e2"></div>
<div class="l" style="left:5px;top:311.57500000000005px;font-size:6.8px;color:#222">视图名称</div>
<div class="l" style="left:57.5px;top:311.57500000000005px;font-size:6.8px;color:#222">{3D}</div>
<div class="a" style="left:0;top:317.24px;width:118px;height:11.33px;border-bottom:1px solid #e2e2e2"></div>
<div class="l" style="left:5px;top:322.90500000000003px;font-size:6.8px;color:#9a9a9a">相关性</div>
<div class="l" style="left:57.5px;top:322.90500000000003px;font-size:6.8px;color:#9a9a9a">不相关</div>
<div class="a" style="left:0;top:328.57px;width:118px;height:11.33px;border-bottom:1px solid #e2e2e2"></div>
<div class="l" style="left:5px;top:334.235px;font-size:6.8px;color:#222">图纸上的标题</div>
<div class="l" style="left:57.5px;top:334.235px;font-size:6.8px;color:#222"></div>
<div class="a" style="left:0;top:339.9px;width:118px;height:11.33px;background:#dcdcdc;border-bottom:1px solid #cfcfcf;z-index:2"></div>
<div class="l" style="left:1px;top:345.565px;font-size:6.8px;color:#222;z-index:3">阶段化</div>
<svg style="left:109.5px;top:342.9px;z-index:3" width="5" height="6" viewBox="0 0 5 6"><path d="M0.7 2.6L2.5 0.8L4.3 2.6M0.7 5.2L2.5 3.4L4.3 5.2" fill="none" stroke="#333" stroke-width="0.8"/></svg>
<div class="a" style="left:0;top:351.23px;width:118px;height:11.33px;border-bottom:1px solid #e2e2e2"></div>
<div class="l" style="left:5px;top:356.89500000000004px;font-size:6.8px;color:#222">阶段过滤器</div>
<div class="l" style="left:57.5px;top:356.89500000000004px;font-size:6.8px;color:#222">全部显示</div>
<div class="a" style="left:0;top:362.56px;width:118px;height:11.33px;border-bottom:1px solid #e2e2e2"></div>
<div class="l" style="left:5px;top:368.225px;font-size:6.8px;color:#222">阶段</div>
<div class="l" style="left:57.5px;top:368.225px;font-size:6.8px;color:#222">阶段 1</div>
<div class="a" style="left:54.8px;top:0;width:1px;height:370px;background:#e2e2e2"></div>
<div class="a" style="left:109.8px;top:0;width:1px;height:370px;background:#e2e2e2"></div>
</div>
<div class="a" style="left:120.5px;top:66px;width:10.5px;height:369.5px;background:#f0f0f0"></div>
<svg style="left:122.5px;top:70.5px" width="6" height="4" viewBox="0 0 6 4"><path d="M0.6 3.2L3 0.8L5.4 3.2" fill="none" stroke="#444" stroke-width="0.9"/></svg>
<svg style="left:122.5px;top:428px" width="6" height="4" viewBox="0 0 6 4"><path d="M0.6 0.8L3 3.2L5.4 0.8" fill="none" stroke="#444" stroke-width="0.9"/></svg>
<div class="a" style="left:121px;top:78px;width:9.5px;height:328px;background:#cdcdcd"></div>
<div class="l" style="left:3px;top:441px;font-size:6.8px;color:#1a5fb4;text-decoration:underline">属性帮助</div>
<div class="a" style="left:88px;top:435.5px;width:41px;height:11.5px;background:#d2d2d2;border:1px solid #c4c4c4"></div>
<div class="c" style="left:108.5px;top:441.5px;font-size:6.8px;color:#9c9c9c">应用</div>
</div>
<div class="a" id="right" style="left:934px;top:109px;width:144px;height:448px;background:#f0f0f0">
<div class="a" style="left:2px;top:0.5px;width:142px;height:9.8px;background:#c5d3e1"></div>
<div class="l" style="left:4px;top:5.4px;font-size:7.2px;color:#1e1e1e">项目浏览器 - 别墅项目.rvt</div>
<svg style="left:134.5px;top:3px" width="6" height="6" viewBox="0 0 6 6"><path d="M0.8 0.8L5.2 5.2M5.2 0.8L0.8 5.2" stroke="#1a1a1a" stroke-width="1.1"/></svg>
<div class="a" style="left:2.5px;top:11.5px;width:141.5px;height:437px;background:#fff;border:1px solid #cfcfcf;overflow:hidden" id="tree">
<div class="a" style="left:4.100px;top:8px;width:0.600px;height:305.9px;background:#dcdcdc"></div>
<svg style="left:1.6px;top:2.37px" width="5.600" height="5.600" viewBox="0 0 5.600 5.600"><rect x="0.350" y="0.350" width="4.900" height="4.900" fill="#fff" stroke="#a8a8a8" stroke-width="0.700"/><path d="M1.500 2.800H4.100" stroke="#777" stroke-width="0.700"/></svg>
<div class="a" style="left:7.2px;top:4.87px;width:2.600px;height:0.6px;background:#c8c8c8"></div>
<svg style="left:10px;top:0.6699999999999999px" width="10" height="9" viewBox="0 0 10 9"><path d="M0.6 2.5V0.6H2.5M7.5 0.6H9.4V2.5M9.4 6.5V8.4H7.5M2.5 8.4H0.6V6.5" fill="none" stroke="#444" stroke-width="0.8"/><circle cx="5" cy="4.5" r="2.2" fill="none" stroke="#666" stroke-width="0.8"/></svg>
<div class="a" style="left:21.5px;top:0.16999999999999993px;width:36px;height:10px;background:#e6e6e6"></div>
<div class="l" style="left:23px;top:5.17px;font-size:6.8px;color:#222">视图 (全部)</div>
<div class="a" style="left:15.200px;top:10.83px;width:0.600px;height:11.33px;background:#dcdcdc"></div>
<svg style="left:12.7px;top:13.7px" width="5.600" height="5.600" viewBox="0 0 5.600 5.600"><rect x="0.350" y="0.350" width="4.900" height="4.900" fill="#fff" stroke="#a8a8a8" stroke-width="0.700"/><path d="M1.500 2.800H4.100M2.800 1.500V4.100" stroke="#777" stroke-width="0.700"/></svg>
<div class="a" style="left:18.3px;top:16.2px;width:4.500px;height:0.6px;background:#c8c8c8"></div>
<div class="l" style="left:26px;top:16.5px;font-size:6.8px;color:#222">楼层平面</div>
<div class="a" style="left:15.200px;top:22.16px;width:0.600px;height:11.33px;background:#dcdcdc"></div>
<svg style="left:12.7px;top:25.02px" width="5.600" height="5.600" viewBox="0 0 5.600 5.600"><rect x="0.350" y="0.350" width="4.900" height="4.900" fill="#fff" stroke="#a8a8a8" stroke-width="0.700"/><path d="M1.500 2.800H4.100M2.800 1.500V4.100" stroke="#777" stroke-width="0.700"/></svg>
<div class="a" style="left:18.3px;top:27.52px;width:4.500px;height:0.6px;background:#c8c8c8"></div>
<div class="l" style="left:26px;top:27.82px;font-size:6.8px;color:#222">天花板平面</div>
<div class="a" style="left:15.200px;top:33.49px;width:0.600px;height:11.33px;background:#dcdcdc"></div>
<svg style="left:12.7px;top:36.36px" width="5.600" height="5.600" viewBox="0 0 5.600 5.600"><rect x="0.350" y="0.350" width="4.900" height="4.900" fill="#fff" stroke="#a8a8a8" stroke-width="0.700"/><path d="M1.500 2.800H4.100M2.800 1.500V4.100" stroke="#777" stroke-width="0.700"/></svg>
<div class="a" style="left:18.3px;top:38.86px;width:4.500px;height:0.6px;background:#c8c8c8"></div>
<div class="l" style="left:26px;top:39.16px;font-size:6.8px;color:#222">三维视图</div>
<div class="a" style="left:15.200px;top:44.82px;width:0.600px;height:11.33px;background:#dcdcdc"></div>
<svg style="left:12.7px;top:47.68px" width="5.600" height="5.600" viewBox="0 0 5.600 5.600"><rect x="0.350" y="0.350" width="4.900" height="4.900" fill="#fff" stroke="#a8a8a8" stroke-width="0.700"/><path d="M1.500 2.800H4.100M2.800 1.500V4.100" stroke="#777" stroke-width="0.700"/></svg>
<div class="a" style="left:18.3px;top:50.18px;width:4.500px;height:0.6px;background:#c8c8c8"></div>
<div class="l" style="left:26px;top:50.48px;font-size:6.8px;color:#222">立面 (建筑立面)</div>
<div class="a" style="left:15.200px;top:56.15px;width:0.600px;height:11.33px;background:#dcdcdc"></div>
<svg style="left:12.7px;top:59.010000000000005px" width="5.600" height="5.600" viewBox="0 0 5.600 5.600"><rect x="0.350" y="0.350" width="4.900" height="4.900" fill="#fff" stroke="#a8a8a8" stroke-width="0.700"/><path d="M1.500 2.800H4.100M2.800 1.500V4.100" stroke="#777" stroke-width="0.700"/></svg>
<div class="a" style="left:18.3px;top:61.510000000000005px;width:4.500px;height:0.6px;background:#c8c8c8"></div>
<div class="l" style="left:26px;top:61.81px;font-size:6.8px;color:#222">剖面 (建筑剖面)</div>
<div class="a" style="left:15.200px;top:67.48px;width:0.600px;height:11.33px;background:#dcdcdc"></div>
<svg style="left:12.7px;top:70.35000000000001px" width="5.600" height="5.600" viewBox="0 0 5.600 5.600"><rect x="0.350" y="0.350" width="4.900" height="4.900" fill="#fff" stroke="#a8a8a8" stroke-width="0.700"/><path d="M1.500 2.800H4.100M2.800 1.500V4.100" stroke="#777" stroke-width="0.700"/></svg>
<div class="a" style="left:18.3px;top:72.85000000000001px;width:4.500px;height:0.6px;background:#c8c8c8"></div>
<div class="l" style="left:26px;top:73.15px;font-size:6.8px;color:#222">渲染</div>
<div class="a" style="left:15.200px;top:78.81px;width:0.600px;height:11.33px;background:#dcdcdc"></div>
<svg style="left:12.7px;top:81.68px" width="5.600" height="5.600" viewBox="0 0 5.600 5.600"><rect x="0.350" y="0.350" width="4.900" height="4.900" fill="#fff" stroke="#a8a8a8" stroke-width="0.700"/><path d="M1.500 2.800H4.100M2.800 1.500V4.100" stroke="#777" stroke-width="0.700"/></svg>
<div class="a" style="left:18.3px;top:84.18px;width:4.500px;height:0.6px;background:#c8c8c8"></div>
<div class="l" style="left:26px;top:84.48px;font-size:6.8px;color:#222">绘图视图 (详图)</div>
<div class="a" style="left:15.200px;top:90.14px;width:0.600px;height:11.33px;background:#dcdcdc"></div>
<svg style="left:12.7px;top:93.01px" width="5.600" height="5.600" viewBox="0 0 5.600 5.600"><rect x="0.350" y="0.350" width="4.900" height="4.900" fill="#fff" stroke="#a8a8a8" stroke-width="0.700"/><path d="M1.500 2.800H4.100M2.800 1.500V4.100" stroke="#777" stroke-width="0.700"/></svg>
<div class="a" style="left:18.3px;top:95.51px;width:4.500px;height:0.6px;background:#c8c8c8"></div>
<div class="l" style="left:26px;top:95.81px;font-size:6.8px;color:#222">漫游</div>
<div class="a" style="left:15.200px;top:101.47px;width:0.600px;height:11.33px;background:#dcdcdc"></div>
<svg style="left:12.7px;top:104.34px" width="5.600" height="5.600" viewBox="0 0 5.600 5.600"><rect x="0.350" y="0.350" width="4.900" height="4.900" fill="#fff" stroke="#a8a8a8" stroke-width="0.700"/><path d="M1.500 2.800H4.100M2.800 1.500V4.100" stroke="#777" stroke-width="0.700"/></svg>
<div class="a" style="left:18.3px;top:106.84px;width:4.500px;height:0.6px;background:#c8c8c8"></div>
<div class="l" style="left:26px;top:107.14px;font-size:6.8px;color:#222">面积平面 (总建筑面积)</div>
<svg style="left:1.6px;top:115.67px" width="5.600" height="5.600" viewBox="0 0 5.600 5.600"><rect x="0.350" y="0.350" width="4.900" height="4.900" fill="#fff" stroke="#a8a8a8" stroke-width="0.700"/><path d="M1.500 2.800H4.100" stroke="#777" stroke-width="0.700"/></svg>
<div class="a" style="left:7.2px;top:118.17px;width:2.600px;height:0.6px;background:#c8c8c8"></div>
<svg style="left:10px;top:113.97px" width="10" height="9" viewBox="0 0 10 9"><rect x="0.6" y="0.8" width="8.8" height="7.4" fill="#fff" stroke="#555" stroke-width="0.8"/><path d="M0.6 3H9.4M3.5 3V8.2M3.5 5.5H9.4" stroke="#777" stroke-width="0.7" fill="none"/></svg>
<div class="l" style="left:23px;top:118.47px;font-size:6.8px;color:#222">图例</div>
<div class="a" style="left:15.200px;top:124.13px;width:0.600px;height:11.33px;background:#dcdcdc"></div>
<div class="a" style="left:15px;top:129.48999999999998px;width:8px;height:0.6px;background:#bbb"></div>
<div class="l" style="left:26px;top:129.79px;font-size:6.8px;color:#222">墙图例</div>
<div class="a" style="left:15.200px;top:135.46px;width:0.600px;height:11.33px;background:#dcdcdc"></div>
<div class="a" style="left:15px;top:140.82px;width:8px;height:0.6px;background:#bbb"></div>
<div class="l" style="left:26px;top:141.12px;font-size:6.8px;color:#222">门窗分格立面图</div>
<div class="a" style="left:15.200px;top:146.79px;width:0.600px;height:11.33px;background:#dcdcdc"></div>
<div class="a" style="left:15px;top:152.14999999999998px;width:8px;height:0.6px;background:#bbb"></div>
<div class="l" style="left:26px;top:152.45px;font-size:6.8px;color:#222">门窗立面分格二</div>
<svg style="left:1.6px;top:160.98px" width="5.600" height="5.600" viewBox="0 0 5.600 5.600"><rect x="0.350" y="0.350" width="4.900" height="4.900" fill="#fff" stroke="#a8a8a8" stroke-width="0.700"/><path d="M1.500 2.800H4.100" stroke="#777" stroke-width="0.700"/></svg>
<div class="a" style="left:7.2px;top:163.48px;width:2.600px;height:0.6px;background:#c8c8c8"></div>
<svg style="left:10px;top:159.28px" width="10" height="9" viewBox="0 0 10 9"><rect x="0.6" y="0.8" width="8.8" height="7.4" fill="#fff" stroke="#555" stroke-width="0.8"/><path d="M0.6 3H9.4M3.5 3V8.2M3.5 5.5H9.4" stroke="#777" stroke-width="0.7" fill="none"/></svg>
<div class="l" style="left:23px;top:163.78px;font-size:6.8px;color:#222">明细表/数量</div>
<div class="a" style="left:15.200px;top:169.45px;width:0.600px;height:11.33px;background:#dcdcdc"></div>
<div class="a" style="left:15px;top:174.81px;width:8px;height:0.6px;background:#bbb"></div>
<div class="l" style="left:26px;top:175.11px;font-size:6.8px;color:#222">体量明细表</div>
<div class="a" style="left:15.200px;top:180.78px;width:0.600px;height:11.33px;background:#dcdcdc"></div>
<div class="a" style="left:15px;top:186.14px;width:8px;height:0.6px;background:#bbb"></div>
<div class="l" style="left:26px;top:186.44px;font-size:6.8px;color:#222">各部门的房间面积</div>
<div class="a" style="left:15.200px;top:192.11px;width:0.600px;height:11.33px;background:#dcdcdc"></div>
<div class="a" style="left:15px;top:197.48px;width:8px;height:0.6px;background:#bbb"></div>
<div class="l" style="left:26px;top:197.78px;font-size:6.8px;color:#222">图纸列表</div>
<div class="a" style="left:15.200px;top:203.44px;width:0.600px;height:11.33px;background:#dcdcdc"></div>
<div class="a" style="left:15px;top:208.79999999999998px;width:8px;height:0.6px;background:#bbb"></div>
<div class="l" style="left:26px;top:209.1px;font-size:6.8px;color:#222">墙明细表</div>
<div class="a" style="left:15.200px;top:214.77px;width:0.600px;height:11.33px;background:#dcdcdc"></div>
<div class="a" style="left:15px;top:220.14px;width:8px;height:0.6px;background:#bbb"></div>
<div class="l" style="left:26px;top:220.44px;font-size:6.8px;color:#222">房间明细表</div>
<div class="a" style="left:15.200px;top:226.1px;width:0.600px;height:11.33px;background:#dcdcdc"></div>
<div class="a" style="left:15px;top:231.45999999999998px;width:8px;height:0.6px;background:#bbb"></div>
<div class="l" style="left:26px;top:231.76px;font-size:6.8px;color:#222">房间明细表 2</div>
<div class="a" style="left:15.200px;top:237.43px;width:0.600px;height:11.33px;background:#dcdcdc"></div>
<div class="a" style="left:15px;top:242.79px;width:8px;height:0.6px;background:#bbb"></div>
<div class="l" style="left:26px;top:243.09px;font-size:6.8px;color:#222">房间面积/涂层(按类型)</div>
<div class="a" style="left:15.200px;top:248.76px;width:0.600px;height:11.33px;background:#dcdcdc"></div>
<div class="a" style="left:15px;top:254.11999999999998px;width:8px;height:0.6px;background:#bbb"></div>
<div class="l" style="left:26px;top:254.42px;font-size:6.8px;color:#222">窗明细表</div>
<div class="a" style="left:15.200px;top:260.09px;width:0.600px;height:11.33px;background:#dcdcdc"></div>
<div class="a" style="left:15px;top:265.45px;width:8px;height:0.6px;background:#bbb"></div>
<div class="l" style="left:26px;top:265.75px;font-size:6.8px;color:#222">窗明细表楼层数量</div>
<div class="a" style="left:15.200px;top:271.42px;width:0.600px;height:11.33px;background:#dcdcdc"></div>
<div class="a" style="left:15px;top:276.78999999999996px;width:8px;height:0.6px;background:#bbb"></div>
<div class="l" style="left:26px;top:277.09px;font-size:6.8px;color:#222">门 窗 表</div>
<div class="a" style="left:15.200px;top:282.75px;width:0.600px;height:11.33px;background:#dcdcdc"></div>
<div class="a" style="left:15px;top:288.12px;width:8px;height:0.6px;background:#bbb"></div>
<div class="l" style="left:26px;top:288.42px;font-size:6.8px;color:#222">门明细表楼层数量</div>
<div class="a" style="left:15.200px;top:294.08px;width:0.600px;height:11.33px;background:#dcdcdc"></div>
<div class="a" style="left:15px;top:299.45px;width:8px;height:0.6px;background:#bbb"></div>
<div class="l" style="left:26px;top:299.75px;font-size:6.8px;color:#222">面积明细表(总建筑面积)</div>
<svg style="left:1.6px;top:308.28px" width="5.600" height="5.600" viewBox="0 0 5.600 5.600"><rect x="0.350" y="0.350" width="4.900" height="4.900" fill="#fff" stroke="#a8a8a8" stroke-width="0.700"/><path d="M1.500 2.800H4.100" stroke="#777" stroke-width="0.700"/></svg>
<div class="a" style="left:7.2px;top:310.78px;width:2.600px;height:0.6px;background:#c8c8c8"></div>
<svg style="left:10px;top:306.58px" width="10" height="9" viewBox="0 0 10 9"><rect x="0.6" y="0.8" width="8.8" height="7.4" fill="#fff" stroke="#555" stroke-width="0.8"/><path d="M0.6 3H9.4M3.5 3V8.2M3.5 5.5H9.4" stroke="#777" stroke-width="0.7" fill="none"/></svg>
<div class="l" style="left:23px;top:311.08px;font-size:6.8px;color:#222">图纸 (全部)</div>
<div class="a" style="left:15.200px;top:316.74px;width:0.600px;height:11.33px;background:#dcdcdc"></div>
<svg style="left:12.7px;top:319.61px" width="5.600" height="5.600" viewBox="0 0 5.600 5.600"><rect x="0.350" y="0.350" width="4.900" height="4.900" fill="#fff" stroke="#a8a8a8" stroke-width="0.700"/><path d="M1.500 2.800H4.100M2.800 1.500V4.100" stroke="#777" stroke-width="0.700"/></svg>
<div class="a" style="left:18.3px;top:322.11px;width:4.500px;height:0.6px;background:#c8c8c8"></div>
<div class="l" style="left:25.5px;top:322.41px;font-size:6.8px;color:#222"><span style="letter-spacing:0.3px;word-spacing:0.5px">2/17 - </span>地下室平面图</div>
<div class="a" style="left:15.200px;top:328.07px;width:0.600px;height:11.33px;background:#dcdcdc"></div>
<svg style="left:12.7px;top:330.94px" width="5.600" height="5.600" viewBox="0 0 5.600 5.600"><rect x="0.350" y="0.350" width="4.900" height="4.900" fill="#fff" stroke="#a8a8a8" stroke-width="0.700"/><path d="M1.500 2.800H4.100M2.800 1.500V4.100" stroke="#777" stroke-width="0.700"/></svg>
<div class="a" style="left:18.3px;top:333.44px;width:4.500px;height:0.6px;background:#c8c8c8"></div>
<div class="l" style="left:25.5px;top:333.74px;font-size:6.8px;color:#222"><span style="letter-spacing:0.3px;word-spacing:0.5px">3/17 - </span>一层平面图</div>
<div class="a" style="left:15.200px;top:339.4px;width:0.600px;height:11.33px;background:#dcdcdc"></div>
<svg style="left:12.7px;top:342.26px" width="5.600" height="5.600" viewBox="0 0 5.600 5.600"><rect x="0.350" y="0.350" width="4.900" height="4.900" fill="#fff" stroke="#a8a8a8" stroke-width="0.700"/><path d="M1.500 2.800H4.100M2.800 1.500V4.100" stroke="#777" stroke-width="0.700"/></svg>
<div class="a" style="left:18.3px;top:344.76px;width:4.500px;height:0.6px;background:#c8c8c8"></div>
<div class="l" style="left:25.5px;top:345.06px;font-size:6.8px;color:#222"><span style="letter-spacing:0.3px;word-spacing:0.5px">4/17 - </span>二层平面图</div>
<div class="a" style="left:15.200px;top:350.73px;width:0.600px;height:11.33px;background:#dcdcdc"></div>
<svg style="left:12.7px;top:353.59999999999997px" width="5.600" height="5.600" viewBox="0 0 5.600 5.600"><rect x="0.350" y="0.350" width="4.900" height="4.900" fill="#fff" stroke="#a8a8a8" stroke-width="0.700"/><path d="M1.500 2.800H4.100M2.800 1.500V4.100" stroke="#777" stroke-width="0.700"/></svg>
<div class="a" style="left:18.3px;top:356.09999999999997px;width:4.500px;height:0.6px;background:#c8c8c8"></div>
<div class="l" style="left:25.5px;top:356.4px;font-size:6.8px;color:#222"><span style="letter-spacing:0.3px;word-spacing:0.5px">5/17 - </span>屋顶平面图</div>
<div class="a" style="left:15.200px;top:362.06px;width:0.600px;height:11.33px;background:#dcdcdc"></div>
<svg style="left:12.7px;top:364.93px" width="5.600" height="5.600" viewBox="0 0 5.600 5.600"><rect x="0.350" y="0.350" width="4.900" height="4.900" fill="#fff" stroke="#a8a8a8" stroke-width="0.700"/><path d="M1.500 2.800H4.100M2.800 1.500V4.100" stroke="#777" stroke-width="0.700"/></svg>
<div class="a" style="left:18.3px;top:367.43px;width:4.500px;height:0.6px;background:#c8c8c8"></div>
<div class="l" style="left:25.5px;top:367.73px;font-size:6.8px;color:#222"><span style="letter-spacing:0.3px;word-spacing:0.5px">6/17 - </span>①-⑦立面图</div>
<div class="a" style="left:15.200px;top:373.39px;width:0.600px;height:11.33px;background:#dcdcdc"></div>
<svg style="left:12.7px;top:376.26px" width="5.600" height="5.600" viewBox="0 0 5.600 5.600"><rect x="0.350" y="0.350" width="4.900" height="4.900" fill="#fff" stroke="#a8a8a8" stroke-width="0.700"/><path d="M1.500 2.800H4.100M2.800 1.500V4.100" stroke="#777" stroke-width="0.700"/></svg>
<div class="a" style="left:18.3px;top:378.76px;width:4.500px;height:0.6px;background:#c8c8c8"></div>
<div class="l" style="left:25.5px;top:379.06px;font-size:6.8px;color:#222"><span style="letter-spacing:0.3px;word-spacing:0.5px">7/17 - </span>⑦-①立面图</div>
<div class="a" style="left:15.200px;top:384.72px;width:0.600px;height:11.33px;background:#dcdcdc"></div>
<svg style="left:12.7px;top:387.59px" width="5.600" height="5.600" viewBox="0 0 5.600 5.600"><rect x="0.350" y="0.350" width="4.900" height="4.900" fill="#fff" stroke="#a8a8a8" stroke-width="0.700"/><path d="M1.500 2.800H4.100M2.800 1.500V4.100" stroke="#777" stroke-width="0.700"/></svg>
<div class="a" style="left:18.3px;top:390.09px;width:4.500px;height:0.6px;background:#c8c8c8"></div>
<div class="l" style="left:25.5px;top:390.39px;font-size:6.8px;color:#222"><span style="letter-spacing:0.3px;word-spacing:0.5px">8/17 - </span><span style="font-size:5px">Ⓐ</span>-<span style="font-size:5px">Ⓕ</span>立面图</div>
<div class="a" style="left:15.200px;top:396.05px;width:0.600px;height:11.33px;background:#dcdcdc"></div>
<svg style="left:12.7px;top:398.92px" width="5.600" height="5.600" viewBox="0 0 5.600 5.600"><rect x="0.350" y="0.350" width="4.900" height="4.900" fill="#fff" stroke="#a8a8a8" stroke-width="0.700"/><path d="M1.500 2.800H4.100M2.800 1.500V4.100" stroke="#777" stroke-width="0.700"/></svg>
<div class="a" style="left:18.3px;top:401.42px;width:4.500px;height:0.6px;background:#c8c8c8"></div>
<div class="l" style="left:25.5px;top:401.72px;font-size:6.8px;color:#222"><span style="letter-spacing:0.3px;word-spacing:0.5px">9/17 - </span><span style="font-size:5px">Ⓕ</span>-<span style="font-size:5px">Ⓐ</span>立面图</div>
<div class="a" style="left:15.200px;top:407.38px;width:0.600px;height:11.33px;background:#dcdcdc"></div>
<svg style="left:12.7px;top:410.25px" width="5.600" height="5.600" viewBox="0 0 5.600 5.600"><rect x="0.350" y="0.350" width="4.900" height="4.900" fill="#fff" stroke="#a8a8a8" stroke-width="0.700"/><path d="M1.500 2.800H4.100M2.800 1.500V4.100" stroke="#777" stroke-width="0.700"/></svg>
<div class="a" style="left:18.3px;top:412.75px;width:4.500px;height:0.6px;background:#c8c8c8"></div>
<div class="l" style="left:25.5px;top:413.05px;font-size:6.8px;color:#222"><span style="letter-spacing:0.3px;word-spacing:0.5px">10/17 - </span>1-1剖面图</div>
<div class="a" style="left:15.200px;top:418.71px;width:0.600px;height:11.33px;background:#dcdcdc"></div>
<svg style="left:12.7px;top:421.58px" width="5.600" height="5.600" viewBox="0 0 5.600 5.600"><rect x="0.350" y="0.350" width="4.900" height="4.900" fill="#fff" stroke="#a8a8a8" stroke-width="0.700"/><path d="M1.500 2.800H4.100M2.800 1.500V4.100" stroke="#777" stroke-width="0.700"/></svg>
<div class="a" style="left:18.3px;top:424.08px;width:4.500px;height:0.6px;background:#c8c8c8"></div>
<div class="l" style="left:25.5px;top:424.38px;font-size:6.8px;color:#222"><span style="letter-spacing:0.3px;word-spacing:0.5px">11/17 - </span>2-2剖面图</div>
<div class="a" style="left:15.200px;top:430.04px;width:0.600px;height:11.33px;background:#dcdcdc"></div>
<svg style="left:12.7px;top:432.90999999999997px" width="5.600" height="5.600" viewBox="0 0 5.600 5.600"><rect x="0.350" y="0.350" width="4.900" height="4.900" fill="#fff" stroke="#a8a8a8" stroke-width="0.700"/><path d="M1.500 2.800H4.100M2.800 1.500V4.100" stroke="#777" stroke-width="0.700"/></svg>
<div class="a" style="left:18.3px;top:435.40999999999997px;width:4.500px;height:0.6px;background:#c8c8c8"></div>
<div class="l" style="left:25.5px;top:435.71px;font-size:6.8px;color:#222"><span style="letter-spacing:0.3px;word-spacing:0.5px">12/17 - </span>大样一 大样五</div>
</div>
<div class="a" style="left:133.5px;top:12px;width:10px;height:436px;background:#f0f0f0"></div>
<svg style="left:135.5px;top:16px" width="6" height="4" viewBox="0 0 6 4"><path d="M0.6 3.2L3 0.8L5.4 3.2" fill="none" stroke="#444" stroke-width="0.9"/></svg>
<svg style="left:135.5px;top:439.5px" width="6" height="4" viewBox="0 0 6 4"><path d="M0.6 0.8L3 3.2L5.4 0.8" fill="none" stroke="#444" stroke-width="0.9"/></svg>
<div class="a" style="left:134px;top:23.8px;width:9px;height:321px;background:#cdcdcd"></div>
</div>
<div class="a" id="canvas">
<!--SCENE--><svg style="left:0;top:0" width="789" height="435" viewBox="134 110 789 435">
<polygon points="189.3,418.3 260.7,502.7 520,478 520,380 330,403" fill="#5b2e00"/>
<polygon points="403.400,483.400 436,459.700 436,482.100 405.400,484.700" fill="#f0cf78"/>
<polygon points="340,415 436,415 436,441 428,442 418,448 393,461 393,464.500 379,465.500 374,466 369.300,461 369.300,441 356,436" fill="#d59853"/>
<polygon points="324,415 345,415 363,436 369.3,437 369.3,455 358,453.5 350,444.500 342,435.500 334.300,427 325.400,421" fill="#d39550"/>
<rect x="332.500" y="419" width="1.800" height="16" fill="#ead9c4"/><rect x="340.500" y="423" width="1.500" height="12" fill="#ead9c4"/>
<path d="M344.300 436 V429 Q346.500 422.500 349.800 428 V445Z" fill="#9a5f26"/><path d="M352.300 445 V438 Q354.600 431.500 357.900 437 V453.500Z" fill="#9a5f26"/>
<path d="M336.500 427 V423 Q338.500 419 341 422.500 V435Z" fill="#a86c30"/>
<polygon points="325.4,420 332.5,424 332.5,440.2 325.4,438.3" fill="#dea562"/>
<polygon points="331.0,423.5 332.5,424 332.5,440.2 331.0,439.7" fill="#c58745"/>
<polygon points="334.3,426 340.5,430 340.5,449.4 334.3,447.8" fill="#dea562"/>
<polygon points="339.0,429.5 340.5,430 340.5,449.4 339.0,448.9" fill="#c58745"/>
<polygon points="342,434.5 348,438.5 348,458.6 342,457" fill="#dea562"/>
<polygon points="346.5,438.0 348,438.5 348,458.6 346.5,458.1" fill="#c58745"/>
<polygon points="350,443.5 356,447.5 356,467.8 350,466" fill="#dea562"/>
<polygon points="354.5,447.0 356,447.5 356,467.8 354.5,467.3" fill="#c58745"/>
<polygon points="357.900,452 369.300,454 369.300,476.300 357.900,470" fill="#e0a864"/>
<polygon points="366,453.500 369.300,454 369.300,476.300 366,474.500" fill="#cf9453"/>
<path d="M335 425.5 L341 427.7" stroke="#b4b4b4" stroke-width="1.700"/>
<path d="M342 433.5 L349.5 435.7" stroke="#b4b4b4" stroke-width="1.700"/>
<path d="M349.5 442.5 L357 444.7" stroke="#b4b4b4" stroke-width="1.700"/>
<path d="M357.5 451.5 L370.5 453.7" stroke="#b4b4b4" stroke-width="1.700"/>
<path d="M369.300 449 Q369.500 441.500 377 441 L406 440.600 Q410 441 410 446 L410 452.500 L393 461.500 L393 464.500 L374 465.600 L369.300 461 Z" fill="#f2d27e"/>
<rect x="382.5" y="441" width="9.5" height="4.600" fill="#0f6f74"/><rect x="390.5" y="441" width="1.500" height="4.600" fill="#e8e8e8"/>
<polygon points="354.500,415 388,415 388.500,429 364,433.5" fill="#2b8486"/>
<polygon points="399,415 418.5,415 418.5,427 399.5,429.500" fill="#2b8486"/>
<path d="M360 415L367 432M366 415L372 431.500M372 415L377 430.500M378 415L382 430M384 415L386.500 429M404 415L404.500 428.500M409 415L409.500 428M414 415L414.500 427.500M357 421H418M359 426H418" stroke="#6fb6b6" stroke-width="0.500" fill="none"/>
<polygon points="388,415 399,415 399.500,429.500 388.500,429" fill="#e9c170"/>
<polygon points="418.5,415 430,415 430,441 418.5,440" fill="#efc876"/>
<polygon points="395.500,472.900 436,452.500 436,459.700 403.400,483.400" fill="#b9b9b9"/>
<path d="M398 472l6 8M401.500 470l6 8M405 468l6 8M408.500 466l6 8M412 464l6 7.500M415.500 462l6 7M419 460l6 6.500M422.500 458l6 6M426 456l6 5.500M429.500 454l6 5" stroke="#e4e4e4" stroke-width="0.700"/>
<polygon points="392.900,461 417.900,447.900 428.400,442 436,441.300 436,452.500 395.500,472.900 392.900,472.900" fill="#d08f4d"/>
<polygon points="429,415 436,415 436,440 429,441" fill="#f3efe6"/>
<polygon points="755,317.300 764,319 790.5,357.300 755,362.500" fill="#0b6a6c"/>
<polygon points="740,364.500 790.5,357.300 774,332 780.5,331.500 850.5,413.700 771.500,423.800 740,428" fill="#5b2e00"/>
<path d="M780.500 331.500L850.500 413.700" stroke="#8a4d10" stroke-width="1.600" fill="none"/>
<path d="M850.500 413.700L771.500 423.800" stroke="#7a430c" stroke-width="1.200" fill="none"/>
<polygon points="770,423.900 835.500,416 859,456.300 798.400,463.400" fill="#0b6a6c"/>
<polygon points="755,396 767.500,402 767.500,411.500 755,414" fill="#d9b17a"/><path d="M755 398L765 403.500L765 409L755 411.500" fill="#f1ead8" stroke="#3a3020" stroke-width="0.600"/>
<polygon points="590,415 772,415 772,423.600 748,427 590,442.500" fill="#f0cb78"/>
<polygon points="590,440.300 748,425 772,421.800 772,423.800 748,427.200 590,442.800" fill="#8a5a1c"/>
<polygon points="700,415 772,415 772,421.5 700,428" fill="#5b2e00" opacity="0"/>
<path fill-rule="evenodd" fill="#545454" d="M834.800 194.500a36.800 15.800 0 1 0 73.600 0a36.800 15.800 0 1 0 -73.600 0Z M841.600 193.300a30 11 0 1 0 60 0a30 11 0 1 0 -60 0Z"/>
<polygon points="855.4,161.8 881,159.3 889.5,168.2 867.4,172.4" fill="#6c6c6c"/>
<polygon points="855.4,161.8 867.4,172.4 865.3,196 857.5,189.2" fill="#595959"/>
<polygon points="867.4,172.4 889.5,168.2 889.500,193.400 865.3,196" fill="#626262"/>
<path d="M871 177.500l2.500-.4v7.500M876.500 176.500l4-.600v8M873.500 176.500l3-.500" stroke="#7c7c7c" stroke-width="1" fill="none"/>
<text x="841" y="199.5" font-size="5.500" fill="#c8c8c8" transform="rotate(20 841 199.500)">左</text>
<text x="881" y="210" font-size="5.500" fill="#c8c8c8" transform="rotate(-12 881 210)">前</text>
<text x="899" y="188" font-size="5.500" fill="#c8c8c8" transform="rotate(25 899 188)">右</text>
<path d="M894.500 119h6" stroke="#eee" stroke-width="1.400"/>
<rect x="904.500" y="117" width="4" height="4.500" fill="none" stroke="#eee" stroke-width="1.100"/><path d="M906 116h4v4.500" fill="none" stroke="#eee" stroke-width="0.900"/>
<path d="M914.500 116.500l5 5M919.500 116.500l-5 5" stroke="#eee" stroke-width="1.400"/>
</svg><!--/SCENE-->
</div>
<div class="a" id="vscroll" style="left:923px;top:110px;width:11px;height:436.5px;background:#f0f0f0">
<svg style="left:2.5px;top:4px" width="6" height="4" viewBox="0 0 6 4"><path d="M0.6 3.2L3 0.8L5.4 3.2" fill="none" stroke="#444" stroke-width="0.9"/></svg>
<svg style="left:2.5px;top:430px" width="6" height="4" viewBox="0 0 6 4"><path d="M0.6 0.8L3 3.2L5.4 0.8" fill="none" stroke="#444" stroke-width="0.9"/></svg>
<div class="a" style="left:1px;top:213px;width:9px;height:10px;background:#cdcdcd"></div>
</div>
<div class="a" id="vcb" style="left:134px;top:546.5px;width:800px;height:11px;background:#f0f0f0;border-left:1px solid #bdbdbd">
<div class="l" style="left:12px;top:5.5px;font-size:6.8px;color:#222;word-spacing:1.5px">1 : 100</div>
<!--VCBICONS--><svg style="left:-1px;top:0" width="800" height="11" viewBox="134 546.500 800 11"><rect x="179" y="548.500" width="9.500" height="6.500" fill="#d8d8d8" stroke="#666" stroke-width="0.800"/><path d="M181 550.500h6M181 552.500h6" stroke="#999" stroke-width="0.700" stroke-dasharray="1 0.700"/><path d="M191.500 550.500l2.500-2h7v5l-2.500 2.500h-7z" fill="#8ec4f0" stroke="#2f7fd0" stroke-width="0.800"/><path d="M191.500 550.500h7l2.500-2M198.500 550.500v5.500" fill="none" stroke="#2f7fd0" stroke-width="0.800"/><circle cx="206.500" cy="551" r="2.500" fill="#f5c542" stroke="#d29a1a" stroke-width="0.600"/><path d="M208 552.500l3.500 3.500M211.500 552.500l-3.500 3.500" stroke="#d43a2a" stroke-width="1.200"/><circle cx="218" cy="551" r="2.500" fill="#cfe1f6" stroke="#2f7fd0" stroke-width="0.700"/><path d="M219.500 552.500l3.500 3.500M223 552.500l-3.500 3.500" stroke="#d43a2a" stroke-width="1.200"/><path d="M226.500 550.500h6l1.500 2-1.500 2.500h-4z" fill="#e8e8e8" stroke="#666" stroke-width="0.700"/><circle cx="232.500" cy="553.500" r="1.800" fill="#8ec4f0" stroke="#2f7fd0" stroke-width="0.600"/><path d="M239 549v7M238 552h9M245.500 549v7" stroke="#2f7fd0" stroke-width="0.900" fill="none"/><path d="M241.500 551l3.500 3.500M245 551l-3.500 3.500" stroke="#d43a2a" stroke-width="1.100"/><path d="M250.500 549v7M249.500 552h9M257 549v7" stroke="#2f7fd0" stroke-width="0.900" fill="none"/><circle cx="255.500" cy="553.500" r="1.800" fill="#fff" stroke="#666" stroke-width="0.600"/><path d="M261.500 552l4.500-3.500 4.500 3.500M262.500 551.500v4.500h7v-4.500" fill="#fff" stroke="#666" stroke-width="0.800"/><rect x="266" y="552.500" width="4" height="3.500" fill="#9cc6ea" stroke="#2f7fd0" stroke-width="0.500"/><path d="M274 551l2.500-1.500M276 553.500a1.800 1.800 0 1 0 3.600 0a1.800 1.800 0 1 0-3.600 0M279.600 553.500h1M280.600 553.500a1.800 1.800 0 1 0 3.600 0a1.800 1.800 0 1 0-3.600 0" fill="none" stroke="#666" stroke-width="0.800"/><path d="M288.500 551.500a2.200 2.200 0 1 1 4.400 0c0 1.500-1.200 1.800-1.200 3h-2c0-1.200-1.200-1.500-1.200-3z" fill="#d6e8fa" stroke="#2f7fd0" stroke-width="0.700"/><rect x="298" y="549.500" width="6.500" height="5" fill="#eee" stroke="#666" stroke-width="0.800"/><circle cx="305" cy="554" r="1.800" fill="#fff" stroke="#666" stroke-width="0.700"/><path d="M310 555v-3.500l3.500-2.500 3.500 2.500v3.500z" fill="#d9b9a0" stroke="#8a6a50" stroke-width="0.700"/><circle cx="316.500" cy="554" r="1.600" fill="#f5c542" stroke="#c9961a" stroke-width="0.500"/><path d="M321.500 551.500l2-2h5v4l-2 2h-5z" fill="#ccc" stroke="#666" stroke-width="0.700"/><circle cx="327.500" cy="554" r="1.600" fill="#eee" stroke="#666" stroke-width="0.600"/><path d="M333 549.500v6.500M333 550h8M341 549.500v4" fill="none" stroke="#666" stroke-width="0.800"/><rect x="337" y="552.500" width="4" height="3.300" fill="#bbb" stroke="#666" stroke-width="0.500"/><path d="M350.500 550l-2.200 2.300 2.200 2.300" fill="none" stroke="#444" stroke-width="0.900"/><path d="M917 550l2.200 2.300-2.200 2.300" fill="none" stroke="#444" stroke-width="0.900"/><rect x="628.500" y="547.500" width="10" height="9" fill="#cdcdcd"/><g fill="#bdbdbd"><rect x="930" y="551" width="1" height="1"/><rect x="928" y="553" width="1" height="1"/><rect x="930" y="553" width="1" height="1"/><rect x="926" y="555" width="1" height="1"/><rect x="928" y="555" width="1" height="1"/><rect x="930" y="555" width="1" height="1"/></g></svg><!--/VCBICONS-->
</div>
<div class="a" id="status">
<div class="l" style="left:3px;top:7.5px;font-size:6.8px;color:#222">就绪</div>
<!--STATUSICONS--><div class="a" style="left:594.500px;top:0.500px;width:50.500px;height:12px;background:#fff"></div><div class="a" style="left:708.500px;top:1px;width:117px;height:11px;background:#fff;border:1px solid #d0d0d0"></div><div class="l" style="left:711.500px;top:6.800px;font-size:6.600px;color:#8a8a8a">主模型</div><div class="l" style="left:661.500px;top:6.800px;font-size:6.600px;color:#333">:0</div><div class="l" style="left:1023px;top:6.800px;font-size:6.600px;color:#333">:0</div><svg style="left:0;top:0" width="1078" height="12.500" viewBox="0 557.500 1078 12.500"><path d="M650 567l5-6.500" stroke="#b0b0b0" stroke-width="1.500"/><path d="M653.500 560l3 1-1 2.500" fill="none" stroke="#b0b0b0" stroke-width="1"/><rect x="681.500" y="560" width="7" height="7.500" fill="#a6a6a6"/><path d="M697 567.500v-6.500h5v6.500M699 561v-1.500h3.500v7" fill="none" stroke="#8f8f8f" stroke-width="1"/><path d="M818.500 562.500l2.300 2.300 2.300-2.300" fill="none" stroke="#b5b5b5" stroke-width="0.800"/><path d="M929.5 561.500l2.500 2.500-1 3.500M931.0 560.500h5l-2.500 4M933.5 564.500v2.500" fill="none" stroke="#9a9a9a" stroke-width="1"/><path d="M944.5 561.500l2.500 2.500-1 3.500M946.0 560.500h5l-2.500 4M948.5 564.500v2.500" fill="none" stroke="#9a9a9a" stroke-width="1"/><path d="M958 561.500l2.500 2.500-1 3.500M959.5 560.500h5l-2.500 4M962 564.500v2.500" fill="none" stroke="#9a9a9a" stroke-width="1"/><path d="M972.5 561.500l2.500 2.500-1 3.500M974.0 560.500h5l-2.500 4M976.5 564.500v2.500" fill="none" stroke="#9a9a9a" stroke-width="1"/><path d="M986 566l5-5M988 561.500l3 3" fill="none" stroke="#c4c4c4" stroke-width="0.900"/><circle cx="1004" cy="564" r="2.800" fill="none" stroke="#b5b5b5" stroke-width="1.200"/><path d="M1013 560.500h9l-3.500 4v3.500l-2-1v-2.500z" fill="#eee" stroke="#555" stroke-width="0.800"/></svg><!--/STATUSICONS-->
</div>
<div class="a" id="dlg" style="left:320px;top:148px;width:438px;height:271.5px;background:#f0f0f0;box-shadow:0 0 0 0.5px #888">
<div class="a" style="left:0;top:0;width:438px;height:17.5px;background:#fff"></div>
<div class="a" style="left:5.5px;top:4px;font-size:9.5px;font-weight:bold;color:#2c5fa5">R</div>
<div class="l" style="left:16px;top:9px;font-size:6.8px;color:#111">保存族</div>
<div class="c" style="left:399.5px;top:8.7px;font-size:7px;color:#111">?</div>
<svg style="left:421.5px;top:5.2px" width="7" height="7" viewBox="0 0 7 7"><path d="M0.6 0.6L6.4 6.4M6.4 0.6L0.6 6.4" stroke="#222" stroke-width="0.8"/></svg>
<div class="r" style="left:68px;top:29px;font-size:6.8px;color:#111;letter-spacing:0.35px">保存于(<u>I</u>):</div>
<div class="a" style="left:70.5px;top:21.5px;width:262.5px;height:12px;background:#e2e2e2;border:1px solid #c8c8c8"></div>
<div class="a" style="left:73px;top:24px;width:9.5px;height:7px;background:#2b9bf0;border-radius:0.6px"></div><div class="a" style="left:75px;top:31px;width:5.5px;height:1px;background:#2377c0"></div>
<div class="l" style="left:83.5px;top:27.5px;font-size:6.8px;color:#111">桌面</div>
<svg style="left:326px;top:26px" width="6" height="4" viewBox="0 0 6 4"><path d="M0.7 0.7L3 3L5.3 0.7" fill="none" stroke="#555" stroke-width="0.8"/></svg>
<svg style="left:337px;top:22px" width="60" height="12" viewBox="0 0 60 12"><path d="M1.5 6L6 2V4.3H10.5V7.7H6V10Z" fill="#3d6fd6" stroke="#2a4fa8" stroke-width="0.5"/><g><rect x="15.5" y="2.5" width="8" height="6.5" fill="#c9c9c9" stroke="#a5a5a5" stroke-width="0.6"/><rect x="16.5" y="3.5" width="6" height="1.6" fill="#b0b0b0"/><path d="M20.5 10h3.5V7.5" fill="none" stroke="#9a9a9a" stroke-width="0.8"/></g><path d="M30.2 3L36.8 9.6M36.8 3L30.2 9.6" stroke="#8f8f8f" stroke-width="1.7"/><g><path d="M43.5 3h3l1 1h5v5.5h-9z" fill="#f3c267" stroke="#d9a23f" stroke-width="0.5"/><circle cx="52.5" cy="9.3" r="1.3" fill="#3d6fd6"/></g></svg>
<div class="l" style="left:399.5px;top:28px;font-size:6.8px;color:#111">查看(<u>V</u>)</div>
<div class="a" style="left:430.5px;top:27px;border-top:2.5px solid #222;border-left:2px solid transparent;border-right:2px solid transparent"></div>
<div class="a" style="left:6.5px;top:35.8px;width:49.5px;height:196.7px;background:#a0a0a0;border-left:1px solid #6e6e6e;border-top:1px solid #6e6e6e"></div>
<div class="c" style="left:30.5px;top:66px;font-size:6.6px;color:#f4f4f4;">我的电脑</div>
<div class="c" style="left:30.5px;top:100px;font-size:6.6px;color:#f4f4f4;">我的...</div>
<div class="c" style="left:30.5px;top:133.5px;font-size:6.6px;color:#f4f4f4;">收藏夹</div>
<div class="c" style="left:30.5px;top:168px;font-size:6.6px;color:#f4f4f4;">桌面</div>
<div class="c" style="left:30.5px;top:201.5px;font-size:6.6px;color:#f4f4f4;font-family:'Liberation Mono',monospace;font-size:6px;letter-spacing:0.2px;">Library</div>
<svg style="left:18.5px;top:38px" width="26" height="180" viewBox="0 0 26 180"><g><path d="M6.5 2.5L17 4.5V13L6.5 11Z" fill="#35a0ee" stroke="#1f78c8" stroke-width="0.5"/><path d="M4 14.5L9.5 12L19 14L13 17Z" fill="#c8ccd2" stroke="#9fa5ad" stroke-width="0.4"/></g><g><circle cx="14" cy="42" r="4.6" fill="#5db4f2" stroke="#2a86d2" stroke-width="0.5"/><path d="M11 40q3-2 6 1M12 45q2-3 5-1" stroke="#cfe9fb" stroke-width="0.7" fill="none"/><path d="M5 44L12.5 45.5V51L5 49.5Z" fill="#35a0ee" stroke="#1f78c8" stroke-width="0.5"/></g><g transform="translate(0,2.500)"><path d="M6.5 69.5L15 68L16.5 71V84L8 85.5Z" fill="#f8df86"/><path d="M6.5 69.5L8 85.5L8 72Z" fill="#e8b93f"/><path d="M15 75.500l1.300 2.800 3 .3-2.300 2 .7 3-2.700-1.600-2.700 1.600.7-3-2.300-2 3-.3z" fill="#f0a820"/></g><g><rect x="2.500" y="102.500" width="22" height="21" fill="#a0a0a0" stroke="#5c5c5c" stroke-width="1"/><path d="M24.500 102.500V123.500H2.500" fill="none" stroke="#c9c9c9" stroke-width="1"/><rect x="4.500" y="107" width="16" height="11.500" rx="0.800" fill="#2196f3" stroke="#1769c0" stroke-width="0.600"/></g><g><path d="M5.500 141L12 140L13 142.500H15.500V153.500L7 154.500Z" fill="#f6d670"/><path d="M5.500 141L7 154.500V143.500Z" fill="#e6bd4a"/></g></svg>
<div class="a" style="left:56px;top:35.8px;width:10px;height:196.7px;background:#f0f0f0"></div>
<svg style="left:58px;top:41px" width="6" height="4" viewBox="0 0 6 4"><path d="M0.6 3.2L3 0.8L5.4 3.2" fill="none" stroke="#444" stroke-width="0.9"/></svg>
<svg style="left:58px;top:225px" width="6" height="4" viewBox="0 0 6 4"><path d="M0.6 0.8L3 3.2L5.4 0.8" fill="none" stroke="#444" stroke-width="0.9"/></svg>
<div class="a" style="left:56.8px;top:96.5px;width:8.400px;height:128px;background:#cdcdcd"></div>
<div class="a" style="left:70.5px;top:34.5px;width:362px;height:171px;background:#fff;overflow:hidden" id="flist">
<div class="l" style="left:4.5px;top:8.5px;font-size:6.6px;color:#3c3c3c">名称</div>
<div class="l" style="left:106px;top:8.5px;font-size:6.6px;color:#3c3c3c">修改日期</div>
<div class="l" style="left:198px;top:8.5px;font-size:6.6px;color:#3c3c3c">类型</div>
<div class="l" style="left:274.5px;top:8.5px;font-size:6.6px;color:#3c3c3c">大小</div>
<svg style="left:50.5px;top:2px" width="5" height="3" viewBox="0 0 5 3"><path d="M0.5 2.6L2.5 0.6L4.5 2.6" fill="none" stroke="#888" stroke-width="0.6"/></svg>
<div class="a" style="left:102.5px;top:0;width:1px;height:171px;background:#f6f6f6"></div>
<div class="a" style="left:194px;top:0;width:1px;height:171px;background:#f6f6f6"></div>
<div class="a" style="left:270.5px;top:0;width:1px;height:171px;background:#f6f6f6"></div>
<div class="a" style="left:321px;top:0;width:1px;height:171px;background:#f6f6f6"></div>
<svg style="left:4px;top:15.90px" width="10" height="10" viewBox="0 0 10 10"><path d="M2.300 7.800h6a1.700 1.700 0 0 0 .3-3.400a2.600 2.600 0 0 0-4.900-.7a2.100 2.100 0 0 0-1.400 4.100z" fill="#1177d7"/></svg>
<div class="l" style="left:15px;top:20.90px;font-size:7.35px;color:#1a1a1a">OneDrive</div>
<div class="l" style="left:106px;top:20.90px;font-size:7.25px;color:#1a1a1a">2020/7/23 20:36</div>
<div class="l" style="left:198px;top:20.90px;font-size:6.7px;color:#1a1a1a">系统文件夹</div>
<svg style="left:4px;top:27.83px" width="10" height="10" viewBox="0 0 10 10"><circle cx="5" cy="2.600" r="1.900" fill="#e0b088"/><path d="M1.500 9.300q0-4.200 3.500-4.200t3.500 4.200z" fill="#2d9b5c"/></svg>
<div class="l" style="left:15px;top:32.83px;font-size:7.35px;color:#1a1a1a">lx</div>
<div class="l" style="left:106px;top:32.83px;font-size:7.25px;color:#1a1a1a">2020/6/23 14:30</div>
<div class="l" style="left:198px;top:32.83px;font-size:6.7px;color:#1a1a1a">系统文件夹</div>
<svg style="left:4px;top:39.76px" width="10" height="10" viewBox="0 0 10 10"><rect x="0.800" y="1.200" width="8.600" height="6" fill="#6ec1f7" stroke="#2a86d2" stroke-width="0.600"/><path d="M2.500 8.800h5.200" stroke="#7a8896" stroke-width="0.900"/></svg>
<div class="l" style="left:15px;top:44.76px;font-size:7.35px;color:#1a1a1a">此电脑</div>
<div class="l" style="left:198px;top:44.76px;font-size:6.7px;color:#1a1a1a">系统文件夹</div>
<svg style="left:4px;top:51.69px" width="10" height="10" viewBox="0 0 10 10"><path d="M0.800 1.500h3l.8 1h4.800v6.300h-8.600z" fill="#f3c84f"/><rect x="2.500" y="4.800" width="5" height="4" fill="#3d9be0"/><rect x="3.900" y="6.500" width="2.200" height="2.300" fill="#fff"/></svg>
<div class="l" style="left:15px;top:56.69px;font-size:7.35px;color:#1a1a1a">库</div>
<div class="l" style="left:198px;top:56.69px;font-size:6.7px;color:#1a1a1a">系统文件夹</div>
<svg style="left:4px;top:63.62px" width="10" height="10" viewBox="0 0 10 10"><circle cx="6" cy="4" r="3.200" fill="#5db4f2" stroke="#2a86d2" stroke-width="0.500"/><path d="M0.800 4.800L5.800 5.800V9.500L0.800 8.500Z" fill="#35a0ee" stroke="#1f78c8" stroke-width="0.400"/></svg>
<div class="l" style="left:15px;top:68.62px;font-size:7.35px;color:#1a1a1a">网络</div>
<div class="l" style="left:198px;top:68.62px;font-size:6.7px;color:#1a1a1a">系统文件夹</div>
<svg style="left:4px;top:75.55px" width="10" height="10" viewBox="0 0 10 10"><path d="M1.800 0.800h6.200v8.400h-6.200z" fill="#f8dc82"/><path d="M1.800 0.800v8.400" stroke="#e6bd4a" stroke-width="0.700"/></svg>
<div class="l" style="left:15px;top:80.55px;font-size:7.35px;color:#1a1a1a">MagiCAD</div>
<div class="l" style="left:106px;top:80.55px;font-size:7.25px;color:#1a1a1a">2020/6/16 10:37</div>
<div class="l" style="left:198px;top:80.55px;font-size:6.7px;color:#1a1a1a">文件夹</div>
<svg style="left:4px;top:87.48px" width="10" height="10" viewBox="0 0 10 10"><path d="M1.800 0.800h6.200v8.400h-6.200z" fill="#f8dc82"/><path d="M1.800 0.800v8.400" stroke="#e6bd4a" stroke-width="0.700"/></svg>
<div class="l" style="left:15px;top:92.48px;font-size:7.35px;color:#1a1a1a">个人资料</div>
<div class="l" style="left:106px;top:92.48px;font-size:7.25px;color:#1a1a1a">2020/8/3 22:52</div>
<div class="l" style="left:198px;top:92.48px;font-size:6.7px;color:#1a1a1a">文件夹</div>
<svg style="left:4px;top:99.41px" width="10" height="10" viewBox="0 0 10 10"><rect x="0.800" y="0.800" width="8.600" height="8.600" rx="0.800" fill="#3a7f3f"/><rect x="0.800" y="0.800" width="8.600" height="2.600" fill="#2f8fd0"/><rect x="0.800" y="5" width="8.600" height="2" fill="#c7782a"/><rect x="4.300" y="0.800" width="1.600" height="8.600" fill="#e8c84a"/></svg>
<div class="l" style="left:15px;top:104.41px;font-size:7.35px;color:#1a1a1a">Lookup+Tables.zip</div>
<div class="l" style="left:106px;top:104.41px;font-size:7.25px;color:#1a1a1a">2020/7/24 14:54</div>
<div class="l" style="left:198px;top:104.41px;font-size:6.7px;color:#1a1a1a">好压 ZIP 压缩文件</div>
<div class="r" style="left:317px;top:104.41px;font-size:7.1px;color:#1a1a1a">0 KB</div>
</div>
<div class="r" style="left:112.5px;top:215px;font-size:6.8px;color:#111;letter-spacing:0.35px">文件名(<u>N</u>):</div>
<div class="a" style="left:115px;top:209.5px;width:253.500px;height:10.500px;background:#f7f7f7;border:1px solid #d0d0d0"></div>
<div class="l" style="left:117.5px;top:215px;font-size:6.6px;color:#9a9a9a">与族名称同名</div>
<svg style="left:361px;top:213.500px" width="6" height="4" viewBox="0 0 6 4"><path d="M0.700 0.700L3 3L5.300 0.700" fill="none" stroke="#bbb" stroke-width="0.800"/></svg>
<div class="r" style="left:112.5px;top:227.500px;font-size:6.8px;color:#111;letter-spacing:0.35px">文件类型(<u>T</u>):</div>
<div class="a" style="left:115px;top:222px;width:253.500px;height:11px;background:#e2e2e2;border:1px solid #c4c4c4"></div>
<div class="l" style="left:117.5px;top:227.500px;font-size:6.6px;color:#111">族文件 (*.rfa)</div>
<svg style="left:361px;top:226px" width="6" height="4" viewBox="0 0 6 4"><path d="M0.700 0.700L3 3L5.300 0.700" fill="none" stroke="#555" stroke-width="0.800"/></svg>
<div class="r" style="left:112.5px;top:247px;font-size:6.8px;color:#111;letter-spacing:0.35px">要保存的族(<u>F</u>):</div>
<div class="a" style="left:115px;top:241px;width:118px;height:12px;background:#cce4f7;border:1px solid #2f86d6"></div>
<div class="l" style="left:117.5px;top:247px;font-size:6.6px;color:#111">&lt;所有族&gt;</div>
<svg style="left:225.500px;top:245.500px" width="6" height="4" viewBox="0 0 6 4"><path d="M0.700 0.700L3 3L5.300 0.700" fill="none" stroke="#333" stroke-width="0.800"/></svg>
<div class="a" style="left:7.5px;top:255.5px;width:49.5px;height:10.5px;background:#e1e1e1;border:1px solid #adadad"></div>
<div class="c" style="left:26.5px;top:260.95px;font-size:6.8px;color:#111">工具(<u>L</u>)</div>
<div class="a" style="left:49.5px;top:259.800px;border-top:2.500px solid #222;border-left:2px solid transparent;border-right:2px solid transparent"></div>
<div class="a" style="left:314.7px;top:255px;width:54px;height:10.5px;background:#e1e1e1;border:1px solid #adadad"></div>
<div class="c" style="left:341.7px;top:260.45px;font-size:6.8px;color:#111">保存(<u>S</u>)</div>
<div class="a" style="left:377.4px;top:255px;width:54.4px;height:10.5px;background:#e1e1e1;border:1px solid #adadad"></div>
<div class="c" style="left:404.6px;top:260.45px;font-size:6.8px;color:#111">取消(<u>C</u>)</div>
<svg style="left:431px;top:262px" width="6" height="6" viewBox="0 0 6 6"><g fill="#bdbdbd"><rect x="4" y="0.500" width="1" height="1"/><rect x="2.300" y="2.300" width="1" height="1"/><rect x="4" y="2.300" width="1" height="1"/><rect x="0.600" y="4" width="1" height="1"/><rect x="2.300" y="4" width="1" height="1"/><rect x="4" y="4" width="1" height="1"/></g></svg>
</div>
<div class="a" id="dd" style="left:435px;top:401px;width:159px;height:170px;background:#fff;border:1px solid #4a98dc;border-bottom:none;overflow:hidden">
<div class="a" id="ddl" style="left:0.5px;top:1px;font-size:6.74px;line-height:6.74px;color:#000">
<div><span class="h">MC_</span>立管<span class="h">,&nbsp;</span>前缀<span class="h">-</span>系统缩写<span class="h">-</span>编号<span class="h">_</span>带引线</div>
<div><span class="h">MC_</span>立管<span class="h">,&nbsp;</span>前缀<span class="h">-</span>编号<span class="h">_</span>带引线</div>
<div><span class="h">MC_</span>立管<span class="h">,&nbsp;</span>系统缩写<span class="h">-</span>编号<span class="h">_</span>带引线</div>
<div><span class="h">MC_</span>系统类型<span class="h">_DN</span>管径<span class="h">,&nbsp;h+</span>相对标高<span class="h">(</span>起点<span class="h">)_</span>带引线</div>
<div><span class="h">MC_</span>系统类型<span class="h">_DN</span>管径<span class="h">,&nbsp;</span>相对标高<span class="h">(</span>起点<span class="h">)</span></div>
<div><span class="h">MC_</span>系统类型<span class="h">_DN</span>管径<span class="h">,&nbsp;</span>相对标高<span class="h">(</span>起点<span class="h">)_</span>带引线</div>
<div><span class="h">MC_</span>系统类型<span class="h">_</span>相对标高<span class="h">(</span>起点<span class="h">)</span></div>
<div><span class="h">MC_</span>系统类型<span class="h">_</span>相对标高<span class="h">(</span>起点<span class="h">)_</span>带引线</div>
<div><span class="h">MC_</span>设备编号</div>
<div><span class="h">MC_</span>设备编号<span class="h">_</span>带引线</div>
<div><span class="h">MC_</span>阀门标注</div>
<div><span class="h">MC_</span>阀门标注<span class="h">_</span>带引线</div>
<div><span class="h">MC_</span>风口<span class="h">,&nbsp;</span>代号<span class="h">-</span>尺寸<span class="h">-</span>数量<span class="h">-</span>风量<span class="h">_</span>带引线</div>
<div><span class="h">MC_</span>风口<span class="h">,&nbsp;</span>名称<span class="h">-</span>尺寸<span class="h">_</span>带引线</div>
<div><span class="h">MC_</span>风口<span class="h">,&nbsp;</span>名称<span class="h">-</span>风量<span class="h">-</span>个数<span class="h">_</span>带引线</div>
<div><span class="h">MC_</span>风口<span class="h">,&nbsp;</span>尺寸<span class="h">-</span>个数<span class="h">-</span>风量<span class="h">_</span>带引线</div>
<div><span class="h">MC_</span>风口<span class="h">,&nbsp;</span>尺寸<span class="h">-</span>数量<span class="h">_</span>带引线</div>
<div><span class="h">MC_</span>风管<span class="h">,&nbsp;</span>尺寸</div>
<div><span class="h">MC_</span>风管<span class="h">,&nbsp;</span>尺寸<span class="h">_</span>带引线</div>
<div><span class="h">MC_</span>风管<span class="h">,&nbsp;</span>尺寸<span class="h">,&nbsp;</span>底标高</div>
<div><span class="h">MC_</span>风管<span class="h">,&nbsp;</span>尺寸<span class="h">,&nbsp;</span>底标高<span class="h">_</span>带引线</div>
<div><span class="h">MC_</span>风管<span class="h">,&nbsp;</span>系统类型<span class="h">,&nbsp;</span>尺寸<span class="h">,&nbsp;</span>底标高</div>
<div><span class="h">MC_</span>风管<span class="h">,&nbsp;</span>系统类型<span class="h">,&nbsp;</span>尺寸<span class="h">,&nbsp;</span>底标高<span class="h">-</span>带引线</div>
<div><span class="h">MC_</span>风管<span class="h">,&nbsp;</span>系统类型<span class="h">,&nbsp;</span>尺寸<span class="h">,&nbsp;</span>底标高<span class="h">_</span>带引线<span class="h">:</span></div>
<div><span class="h">MC_</span>风阀标注<span class="h">_</span>带引线</div>
<div><span class="h">MC_</span>风阀标注<span class="h">_</span>带引线<span class="h">2</span></div>
</div>
<div class="a" style="left:148.500px;top:0;width:9.500px;height:170px;background:#f0f0f0"></div>
<svg style="left:150.500px;top:4px" width="6" height="4" viewBox="0 0 6 4"><path d="M0.600 3.200L3 0.800L5.400 3.200" fill="none" stroke="#444" stroke-width="0.900"/></svg>
<div class="a" style="left:149px;top:65px;width:8.500px;height:43px;background:#c1c1c1"></div>
</div>
<style>#ddl .h{font-family:"Liberation Mono",monospace;letter-spacing:-0.674px}#ddl div{height:6.74px;white-space:nowrap}</style>
</div><!--root-->
</body>
</html>
